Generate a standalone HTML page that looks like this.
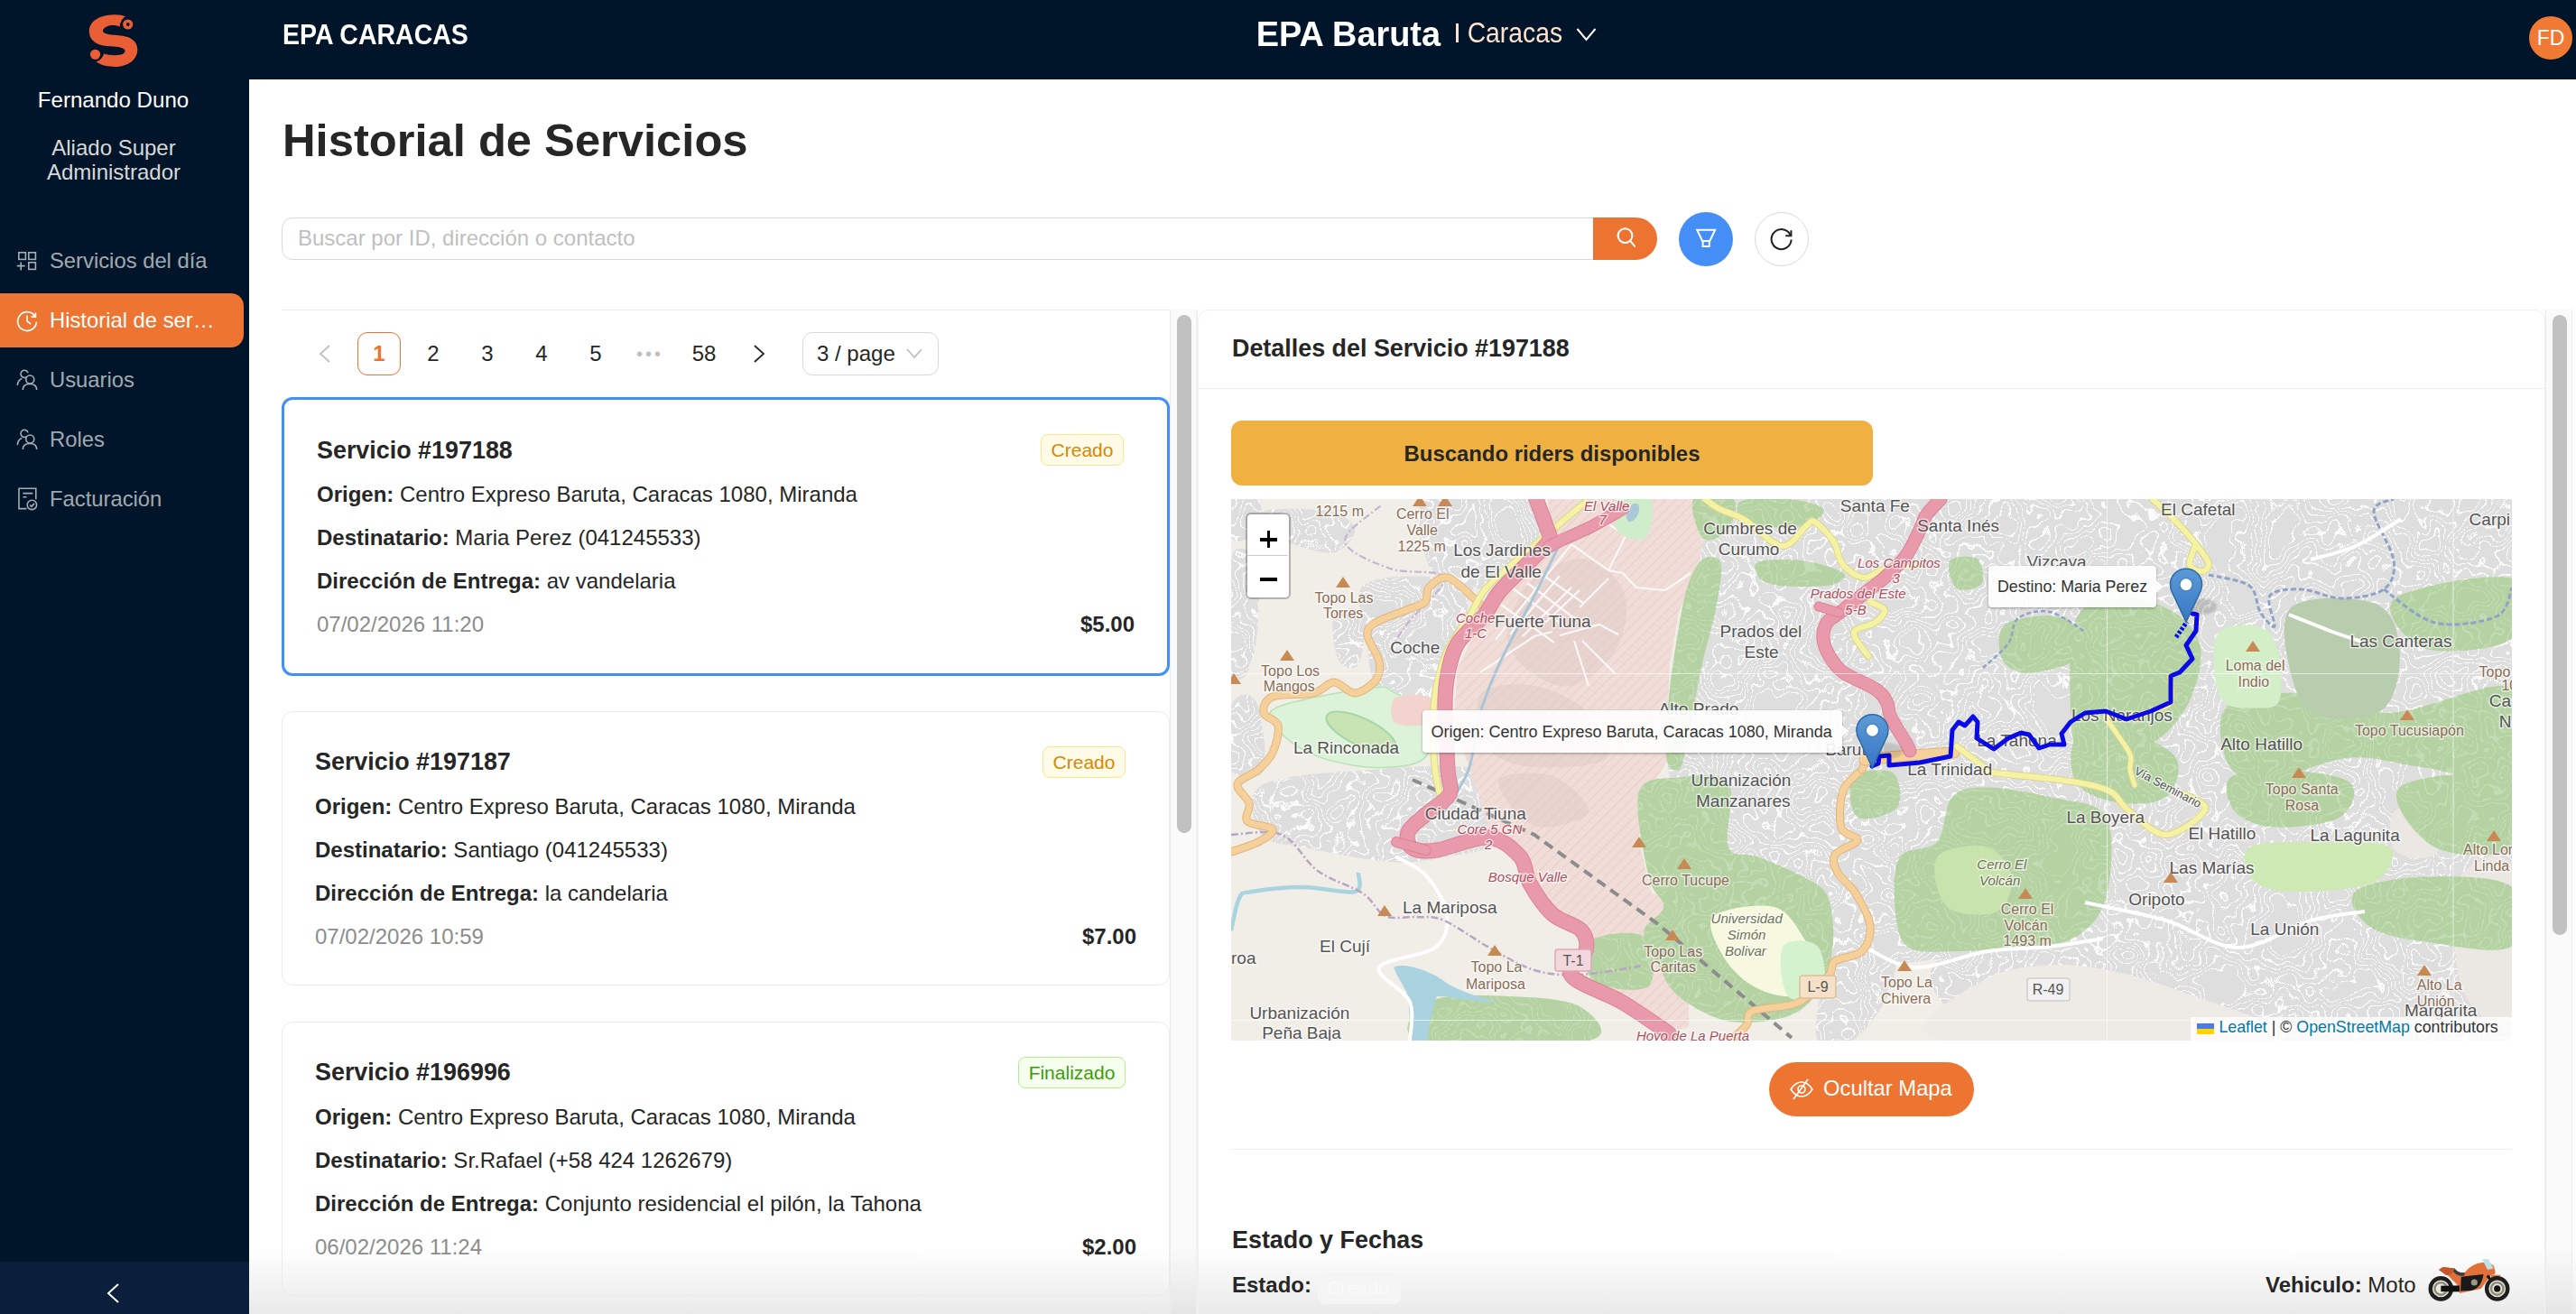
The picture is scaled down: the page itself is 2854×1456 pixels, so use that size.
<!DOCTYPE html>
<html><head><meta charset="utf-8">
<style>
*{box-sizing:border-box;margin:0;padding:0}
html,body{width:2854px;height:1456px;overflow:hidden;background:#fff;font-family:"Liberation Sans",sans-serif;color:#262626}
.a{position:absolute;white-space:nowrap;line-height:1}
.b{font-weight:bold}
#side{position:absolute;left:0;top:0;width:276px;height:1456px;background:#001529}
#trig{position:absolute;left:0;top:1398px;width:276px;height:58px;background:#0b1f3c}
#hdr{position:absolute;left:276px;top:0;width:2578px;height:88px;background:#001529}
.mi{position:absolute;left:55px;font-size:23.8px;color:rgba(255,255,255,0.65);line-height:1;white-space:nowrap}
.card{position:absolute;left:312px;width:984px;border:1px solid #ebebeb;border-radius:12px}
.tag{position:absolute;height:35px;border-radius:8px;font-size:21px;line-height:33px;text-align:center;border:1px solid}
.tc{background:#fffbe6;border-color:#ffe58f;color:#d48806}
.tf{background:#f6ffed;border-color:#b7eb8f;color:#389e0d}
</style></head><body>
<div style="position:absolute;left:276px;top:1382px;width:2578px;height:74px;background:linear-gradient(rgba(234,234,234,0),rgba(234,234,234,1))"></div>

<!-- SIDEBAR -->
<div id="side">
  <svg style="position:absolute;left:90px;top:10px" width="70" height="70" viewBox="0 0 70 70">
    <path fill="#e95e34" d="M49 8.3 C44 5.5,30 5,20 9.5 C12 13,8.5 19,8.8 25 C9 33,14 38,24 40.5 C30 41.5,40 41,46 43.5 C50 45.5,49 49.5,44 50.5 C38 52,30 51,25 49.5 C24 54,20 57.5,16.5 58.6 C22 62.5,30 64,37 64 C52 64,62.3 56,62.3 45 C62.3 36,55 31,46 29.8 C40 29,34 28.5,30 28 C25 27,23.5 25,24 23.5 C25 19.5,32 17.5,37 18 C40 18.5,42 19,42.6 19.7 C43 14,46 10,49 8.3 Z"/>
    <circle cx="51.7" cy="17" r="3.75" fill="none" stroke="#e95e34" stroke-width="3.7"/>
    <circle cx="15.5" cy="50.3" r="5.6" fill="#e95e34"/>
  </svg>
  <div class="a" style="left:0;width:251px;text-align:center;top:98.6px;font-size:24.1px;color:#fff">Fernando Duno</div>
  <div class="a" style="left:0;width:252px;text-align:center;top:151.7px;font-size:24px;color:#d9d9d9">Aliado Super</div>
  <div class="a" style="left:0;width:252px;text-align:center;top:179px;font-size:24px;color:#d9d9d9">Administrador</div>

  <div style="position:absolute;left:0;top:325px;width:270px;height:60px;background:#ed7431;border-radius:0 14px 14px 0"></div>
  <!-- icons -->
  <svg style="position:absolute;left:17px;top:277px" width="26" height="26" viewBox="0 0 26 26" fill="none" stroke="#a6adb4" stroke-width="1.6">
    <rect x="3.8" y="2.8" width="7.6" height="7.6"/><rect x="14.8" y="2.8" width="7.6" height="7.6"/><rect x="14.8" y="13.8" width="7.6" height="7.6"/>
    <path d="M1.8 17.6 H10.6 M6.2 13.4 V22.5"/>
  </svg>
  <svg style="position:absolute;left:17px;top:342px" width="26" height="26" viewBox="0 0 26 26" fill="none" stroke="#fff" stroke-width="1.7">
    <path d="M21.6 8.2 A10.4 10.4 0 1 0 23.4 14.6"/>
    <path d="M17.6 8.8 L22.4 9.4 L22.4 4.6" />
    <path d="M13 7.5 V13.8 L17 17"/>
  </svg>
  <svg style="position:absolute;left:17px;top:408px" width="26" height="26" viewBox="0 0 26 26" fill="none" stroke="#a6adb4" stroke-width="1.6">
    <circle cx="16.3" cy="12.5" r="4.5"/><path d="M8.3 24 C8.3 19.6,11.5 17.5,16 17.5 C20.5 17.5,23.7 19.6,23.7 24"/>
    <path d="M12.45 9.76 A4.1 4.1 0 1 1 14.06 5.34"/><path d="M2.3 19 C2.6 15,4.5 12.5,7.2 11.5"/>
  </svg>
  <svg style="position:absolute;left:17px;top:474px" width="26" height="26" viewBox="0 0 26 26" fill="none" stroke="#a6adb4" stroke-width="1.6">
    <circle cx="16.3" cy="12.5" r="4.5"/><path d="M8.3 24 C8.3 19.6,11.5 17.5,16 17.5 C20.5 17.5,23.7 19.6,23.7 24"/>
    <path d="M12.45 9.76 A4.1 4.1 0 1 1 14.06 5.34"/><path d="M2.3 19 C2.6 15,4.5 12.5,7.2 11.5"/>
  </svg>
  <svg style="position:absolute;left:18px;top:540px" width="26" height="26" viewBox="0 0 26 26" fill="none" stroke="#a6adb4" stroke-width="1.6">
    <path d="M11.5 23.6 H3 V1.3 H21.8 V13.3"/><path d="M7.4 6.6 H18.3 M7.4 10.7 H11.5"/>
    <circle cx="17.4" cy="19.4" r="5.2"/><path d="M15 19.5 L16.9 21.3 L19.9 17.9"/>
  </svg>
  <div class="mi" style="top:277.4px">Servicios del día</div>
  <div class="mi" style="top:343px;color:#fff">Historial de ser…</div>
  <div class="mi" style="top:408.8px">Usuarios</div>
  <div class="mi" style="top:474.5px">Roles</div>
  <div class="mi" style="top:540.8px">Facturación</div>
  <div id="trig">
    <svg style="position:absolute;left:116px;top:23px" width="20" height="24" viewBox="0 0 20 24" fill="none" stroke="#fff" stroke-width="2"><path d="M15 2 L4 12 L15 22"/></svg>
  </div>
</div>

<!-- HEADER -->
<div id="hdr">
  <div class="a b" style="left:37px;top:25.2px;font-size:28.5px;color:#fff;transform:scaleY(1.12);transform-origin:0 84.5%">EPA CARACAS</div>
  <div class="a b" style="left:1115.8px;top:20.1px;font-size:37.9px;color:#fff;transform:scaleY(1.035);transform-origin:0 84.5%">EPA Baruta</div>
  <div style="position:absolute;left:1337px;top:26px;width:3px;height:21px;background:#fde3cf"></div>
  <div class="a" style="left:1349.7px;top:23.3px;font-size:28.3px;color:#fde3cf;transform:scaleY(1.14);transform-origin:0 84.5%">Caracas</div>
  <svg style="position:absolute;left:1470px;top:30px" width="24" height="18" viewBox="0 0 24 18" fill="none" stroke="#fff" stroke-width="2"><path d="M1.5 2 L11.5 14 L21.5 2"/></svg>
  <div style="position:absolute;left:2526px;top:18px;width:48px;height:48px;border-radius:50%;background:#f07a33;color:#fff;font-size:23px;line-height:48px;text-align:center">FD</div>
</div>

<!-- TITLE + SEARCH -->
<div class="a b" style="left:313px;top:131px;font-size:50.7px;color:#262626">Historial de Servicios</div>
<div style="position:absolute;left:312px;top:241px;width:1460px;height:47px;border:1px solid #d9d9d9;border-radius:12px 0 0 12px"></div>
<div class="a" style="left:330px;top:252px;font-size:24px;color:#bfbfbf">Buscar por ID, dirección o contacto</div>
<div style="position:absolute;left:1765px;top:241px;width:71px;height:47px;background:#ed7331;border-radius:0 24px 24px 0"></div>
<svg style="position:absolute;left:1786px;top:250px" width="30" height="30" viewBox="0 0 30 30" fill="none" stroke="#fff" stroke-width="2"><circle cx="14.5" cy="11.1" r="7.9"/><path d="M20 16.6 L25.6 23.4"/></svg>
<div style="position:absolute;left:1860px;top:235px;width:60px;height:60px;border-radius:50%;background:#458ef5"></div>
<svg style="position:absolute;left:1875px;top:250px" width="30" height="30" viewBox="0 0 30 30" fill="none" stroke="#fff" stroke-width="2" stroke-linejoin="miter"><path d="M5.2 4.8 H25.2 L19.3 17 H11.1 Z"/><path d="M11.6 17 V23 H18.8 V17"/></svg>
<div style="position:absolute;left:1944px;top:235px;width:60px;height:60px;border-radius:50%;border:1px solid #d9d9d9;background:#fff"></div>
<svg style="position:absolute;left:1959px;top:249px" width="30" height="30" viewBox="0 0 30 30" fill="none" stroke="#222" stroke-width="2"><path d="M24.6 11.5 A11 11 0 1 0 25.6 16.5"/><path d="M25.4 6.2 V12.3 H19.2"/></svg>

<!-- LEFT LIST -->
<div style="position:absolute;left:312px;top:343px;width:984px;height:1px;background:#ebebeb"></div>
<div id="pag">
  <svg style="position:absolute;left:352px;top:381px" width="16" height="22" viewBox="0 0 16 22" fill="none" stroke="#bfbfbf" stroke-width="1.8"><path d="M13 2 L3 11 L13 20"/></svg>
  <div style="position:absolute;left:396px;top:368px;width:48px;height:48px;border:1.6px solid #ed7331;border-radius:11px;color:#ed7331;font-weight:bold;font-size:24px;line-height:45px;text-align:center">1</div>
  <div class="a" style="left:456px;top:368px;width:48px;line-height:48px;text-align:center;font-size:24px">2</div>
  <div class="a" style="left:516px;top:368px;width:48px;line-height:48px;text-align:center;font-size:24px">3</div>
  <div class="a" style="left:576px;top:368px;width:48px;line-height:48px;text-align:center;font-size:24px">4</div>
  <div class="a" style="left:636px;top:368px;width:48px;line-height:48px;text-align:center;font-size:24px">5</div>
  <div class="a" style="left:696px;top:368px;width:48px;line-height:48px;text-align:center;font-size:20px;color:#bfbfbf;letter-spacing:3px">•••</div>
  <div class="a" style="left:756px;top:368px;width:48px;line-height:48px;text-align:center;font-size:24px">58</div>
  <svg style="position:absolute;left:833px;top:381px" width="16" height="22" viewBox="0 0 16 22" fill="none" stroke="#262626" stroke-width="1.8"><path d="M3 2 L13 11 L3 20"/></svg>
  <div style="position:absolute;left:889px;top:368px;width:151px;height:48px;border:1px solid #d9d9d9;border-radius:11px"></div>
  <div class="a" style="left:905px;top:368px;line-height:48px;font-size:24px">3 / page</div>
  <svg style="position:absolute;left:1003px;top:384px" width="20" height="16" viewBox="0 0 20 16" fill="none" stroke="#bfbfbf" stroke-width="1.8"><path d="M2 3 L10 12 L18 3"/></svg>
</div>

<div class="card" style="top:440px;height:309px;border:3px solid #4190f5">
  <div class="a b" style="left:36px;top:42.7px;font-size:26.9px">Servicio #197188</div>
  <div class="tag tc" style="left:838px;top:38px;width:92px">Creado</div>
  <div class="a" style="left:36px;top:93px;font-size:24px"><b>Origen:</b> Centro Expreso Baruta, Caracas 1080, Miranda</div>
  <div class="a" style="left:36px;top:141px;font-size:24px"><b>Destinatario:</b> Maria Perez (041245533)</div>
  <div class="a" style="left:36px;top:189px;font-size:24px"><b>Dirección de Entrega:</b> av vandelaria</div>
  <div class="a" style="left:36px;top:237px;font-size:24px;color:#8c8c8c">07/02/2026 11:20</div>
  <div class="a b" style="right:36px;top:237px;font-size:24px">$5.00</div>
</div>

<div class="card" style="top:788px;height:304px">
  <div class="a b" style="left:36px;top:42px;font-size:26.9px">Servicio #197187</div>
  <div class="tag tc" style="left:842px;top:38px;width:92px">Creado</div>
  <div class="a" style="left:36px;top:93px;font-size:24px"><b>Origen:</b> Centro Expreso Baruta, Caracas 1080, Miranda</div>
  <div class="a" style="left:36px;top:141px;font-size:24px"><b>Destinatario:</b> Santiago (041245533)</div>
  <div class="a" style="left:36px;top:189px;font-size:24px"><b>Dirección de Entrega:</b> la candelaria</div>
  <div class="a" style="left:36px;top:237px;font-size:24px;color:#8c8c8c">07/02/2026 10:59</div>
  <div class="a b" style="right:36px;top:237px;font-size:24px">$7.00</div>
</div>

<div class="card" style="top:1132px;height:304px">
  <div class="a b" style="left:36px;top:42px;font-size:26.9px">Servicio #196996</div>
  <div class="tag tf" style="left:815px;top:38px;width:119px">Finalizado</div>
  <div class="a" style="left:36px;top:93px;font-size:24px"><b>Origen:</b> Centro Expreso Baruta, Caracas 1080, Miranda</div>
  <div class="a" style="left:36px;top:141px;font-size:24px"><b>Destinatario:</b> Sr.Rafael (+58 424 1262679)</div>
  <div class="a" style="left:36px;top:189px;font-size:24px"><b>Dirección de Entrega:</b> Conjunto residencial el pilón, la Tahona</div>
  <div class="a" style="left:36px;top:237px;font-size:24px;color:#8c8c8c">06/02/2026 11:24</div>
  <div class="a b" style="right:36px;top:237px;font-size:24px">$2.00</div>
</div>

<!-- scrollbar left -->
<div style="position:absolute;left:1296px;top:343px;width:31px;height:1113px;background:rgba(0,0,0,0.02);border-left:1.5px solid #ebebeb;border-right:2px solid #f0f0f0"></div>
<div style="position:absolute;left:1304px;top:349px;width:16px;height:574px;background:#c1c1c1;border-radius:8px"></div>

<!-- RIGHT PANEL -->
<div style="position:absolute;left:1327px;top:343px;width:1493px;height:1200px;border:1px solid #f0f0f0;border-radius:12px"></div>
<div style="position:absolute;left:1328px;top:430px;width:1491px;height:1px;background:#f0f0f0"></div>
<div class="a b" style="left:1365px;top:373px;font-size:26.9px">Detalles del Servicio #197188</div>
<div style="position:absolute;left:1364px;top:466px;width:711px;height:72px;background:#efb141;border-radius:12px"></div>
<div class="a b" style="left:1364px;width:711px;text-align:center;top:490.6px;font-size:23.9px">Buscando riders disponibles</div>

<!--MAP--><div id="map" style="position:absolute;left:1364px;top:553px;width:1419px;height:600px;background:#f1eee8;overflow:hidden">
<svg width="1419" height="600" viewBox="1364 553 1419 600" style="position:absolute;left:0;top:0">
<defs><pattern id="hatch" width="8" height="8" patternUnits="userSpaceOnUse" patternTransform="rotate(45)"><rect width="8" height="8" fill="#f0ddd8"/><line x1="0" y1="0" x2="0" y2="8" stroke="#e6c3bd" stroke-width="1.1"/></pattern>
<filter id="blur1"><feGaussianBlur stdDeviation="1.2"/></filter></defs>
<rect x="1364" y="553" width="1419" height="600" fill="#f1eee8"/>
<path d="M1890.0 553.0 C2038.8 540.2,2634.2 453.0,2783.0 553.0 C2931.8 653.0,2830.2 1053.0,2783.0 1153.0 C2735.8 1253.0,2563.8 1160.2,2500.0 1153.0 C2436.2 1145.8,2431.7 1122.2,2400.0 1110.0 C2368.3 1097.8,2343.3 1088.3,2310.0 1080.0 C2276.7 1071.7,2251.7 1061.7,2200.0 1060.0 C2148.3 1058.3,2035.0 1081.7,2000.0 1070.0 C1965.0 1058.3,2003.3 1004.2,1990.0 990.0 C1976.7 975.8,1934.2 1000.0,1920.0 985.0 C1905.8 970.0,1916.7 920.8,1905.0 900.0 C1893.3 879.2,1857.5 876.7,1850.0 860.0 C1842.5 843.3,1856.7 826.7,1860.0 800.0 C1863.3 773.3,1865.0 728.3,1870.0 700.0 C1875.0 671.7,1886.7 654.5,1890.0 630.0 C1893.3 605.5,1741.2 565.8,1890.0 553.0 Z" fill="#dfdede"/>
<path d="M1398.0 870.0 C1418.3 858.0,1479.7 855.8,1520.0 853.0 C1560.3 850.2,1616.7 845.2,1640.0 853.0 C1663.3 860.8,1653.3 887.2,1660.0 900.0 C1666.7 912.8,1690.0 921.7,1680.0 930.0 C1670.0 938.3,1623.3 945.8,1600.0 950.0 C1576.7 954.2,1565.0 956.7,1540.0 955.0 C1515.0 953.3,1473.7 945.0,1450.0 940.0 C1426.3 935.0,1406.7 936.7,1398.0 925.0 C1389.3 913.3,1377.7 882.0,1398.0 870.0 Z" fill="#dfdede"/>
<path d="M1364.0 553.0 C1368.9 546.2,1388.3 547.7,1393.7 553.0 C1399.0 558.3,1398.6 577.3,1396.0 585.0 C1393.3 592.6,1383.0 597.1,1377.7 598.7 C1372.4 600.2,1366.3 601.7,1364.0 594.1 C1361.7 586.5,1359.1 559.8,1364.0 553.0 Z" fill="#dfdede"/>
<path d="M1398.2 566.7 C1410.4 562.5,1456.4 563.3,1473.6 566.7 C1490.7 570.1,1500.2 579.6,1501.0 587.2 C1501.7 594.8,1489.5 609.7,1478.1 612.3 C1466.7 615.0,1445.4 606.6,1432.5 603.2 C1419.5 599.8,1406.2 597.9,1400.5 591.8 C1394.8 585.7,1386.1 570.9,1398.2 566.7 Z" fill="#dfdede"/>
<path d="M1364.0 619.2 C1368.6 598.3,1386.4 609.7,1391.4 621.5 C1396.3 633.3,1394.8 670.2,1393.7 690.0 C1392.5 709.7,1389.5 730.7,1384.5 740.2 C1379.6 749.7,1367.4 767.2,1364.0 747.0 C1360.6 726.9,1359.4 640.1,1364.0 619.2 Z" fill="#dfdede"/>
<path d="M1510.1 648.9 C1523.0 636.7,1572.9 637.8,1592.3 639.7 C1611.7 641.6,1622.7 648.1,1626.5 660.3 C1630.3 672.5,1620.8 693.4,1615.1 712.8 C1609.4 732.2,1601.8 765.3,1592.3 776.7 C1582.7 788.1,1569.4 784.3,1558.0 781.3 C1546.6 778.2,1531.0 769.8,1523.8 758.4 C1516.6 747.0,1516.9 731.0,1514.7 712.8 C1512.4 694.5,1497.2 661.0,1510.1 648.9 Z" fill="#dfdede"/>
<path d="M1580.8 553.0 C1601.8 541.6,1687.4 543.5,1706.4 553.0 C1725.4 562.5,1704.5 594.1,1695.0 610.1 C1685.5 626.0,1663.4 642.0,1649.3 648.9 C1635.2 655.7,1621.9 655.7,1610.5 651.2 C1599.1 646.6,1585.8 637.8,1580.8 621.5 C1575.9 605.1,1559.9 564.4,1580.8 553.0 Z" fill="#dfdede"/>
<path d="M1478.1 680.8 C1482.7 672.5,1505.5 671.7,1510.1 680.8 C1514.7 690.0,1510.1 727.2,1505.5 735.6 C1501.0 744.0,1487.3 740.2,1482.7 731.0 C1478.1 721.9,1473.6 689.2,1478.1 680.8 Z" fill="#dfdede"/>
<path d="M1364.0 781.3 C1368.6 768.6,1385.3 764.7,1391.4 776.7 C1397.5 788.6,1405.1 840.2,1400.5 852.9 C1396.0 865.6,1370.1 864.9,1364.0 852.9 C1357.9 841.0,1359.4 794.0,1364.0 781.3 Z" fill="#dfdede"/>
<path d="M2041.6 1048.8 C2054.4 1041.9,2088.4 1042.3,2096.6 1051.5 C2104.9 1060.7,2098.5 1087.0,2091.1 1103.9 C2083.8 1120.7,2065.4 1144.7,2052.6 1152.9 C2039.7 1161.1,2019.5 1162.9,2014.0 1152.9 C2008.5 1142.9,2014.9 1110.2,2019.5 1092.8 C2024.1 1075.5,2028.7 1055.7,2041.6 1048.8 Z" fill="#dfdede"/>
<path d="M2146.2 1065.3 C2159.1 1057.5,2197.6 1057.0,2223.3 1057.0 C2249.0 1057.0,2285.8 1057.5,2300.5 1065.3 C2315.1 1073.1,2317.0 1091.9,2311.5 1103.9 C2306.0 1115.8,2287.6 1132.3,2267.4 1136.9 C2247.2 1141.5,2210.5 1136.9,2190.3 1131.4 C2170.1 1125.9,2153.6 1114.9,2146.2 1103.9 C2138.9 1092.8,2133.4 1073.1,2146.2 1065.3 Z" fill="#dfdede"/>
<path d="M2355.5 1048.8 C2370.2 1039.6,2415.2 1038.7,2438.2 1043.3 C2461.1 1047.9,2488.7 1062.5,2493.3 1076.3 C2497.8 1090.1,2481.3 1115.8,2465.7 1125.9 C2450.1 1136.0,2418.9 1141.5,2399.6 1136.9 C2380.3 1132.3,2357.4 1113.0,2350.0 1098.3 C2342.7 1083.7,2340.8 1057.9,2355.5 1048.8 Z" fill="#dfdede"/>
<path d="M2575.9 1103.9 C2585.1 1094.8,2638.3 1090.2,2658.5 1098.3 C2678.7 1106.5,2706.2 1143.8,2697.1 1152.9 C2687.9 1162.0,2623.6 1161.1,2603.4 1152.9 C2583.2 1144.7,2566.7 1112.9,2575.9 1103.9 Z" fill="#dfdede"/>
<clipPath id="urb">
<path d="M1890.0 553.0 C2038.8 540.2,2634.2 453.0,2783.0 553.0 C2931.8 653.0,2830.2 1053.0,2783.0 1153.0 C2735.8 1253.0,2563.8 1160.2,2500.0 1153.0 C2436.2 1145.8,2431.7 1122.2,2400.0 1110.0 C2368.3 1097.8,2343.3 1088.3,2310.0 1080.0 C2276.7 1071.7,2251.7 1061.7,2200.0 1060.0 C2148.3 1058.3,2035.0 1081.7,2000.0 1070.0 C1965.0 1058.3,2003.3 1004.2,1990.0 990.0 C1976.7 975.8,1934.2 1000.0,1920.0 985.0 C1905.8 970.0,1916.7 920.8,1905.0 900.0 C1893.3 879.2,1857.5 876.7,1850.0 860.0 C1842.5 843.3,1856.7 826.7,1860.0 800.0 C1863.3 773.3,1865.0 728.3,1870.0 700.0 C1875.0 671.7,1886.7 654.5,1890.0 630.0 C1893.3 605.5,1741.2 565.8,1890.0 553.0 Z"/>
<path d="M1398.0 870.0 C1418.3 858.0,1479.7 855.8,1520.0 853.0 C1560.3 850.2,1616.7 845.2,1640.0 853.0 C1663.3 860.8,1653.3 887.2,1660.0 900.0 C1666.7 912.8,1690.0 921.7,1680.0 930.0 C1670.0 938.3,1623.3 945.8,1600.0 950.0 C1576.7 954.2,1565.0 956.7,1540.0 955.0 C1515.0 953.3,1473.7 945.0,1450.0 940.0 C1426.3 935.0,1406.7 936.7,1398.0 925.0 C1389.3 913.3,1377.7 882.0,1398.0 870.0 Z"/>
<path d="M1364.0 553.0 C1368.9 546.2,1388.3 547.7,1393.7 553.0 C1399.0 558.3,1398.6 577.3,1396.0 585.0 C1393.3 592.6,1383.0 597.1,1377.7 598.7 C1372.4 600.2,1366.3 601.7,1364.0 594.1 C1361.7 586.5,1359.1 559.8,1364.0 553.0 Z"/>
<path d="M1398.2 566.7 C1410.4 562.5,1456.4 563.3,1473.6 566.7 C1490.7 570.1,1500.2 579.6,1501.0 587.2 C1501.7 594.8,1489.5 609.7,1478.1 612.3 C1466.7 615.0,1445.4 606.6,1432.5 603.2 C1419.5 599.8,1406.2 597.9,1400.5 591.8 C1394.8 585.7,1386.1 570.9,1398.2 566.7 Z"/>
<path d="M1364.0 619.2 C1368.6 598.3,1386.4 609.7,1391.4 621.5 C1396.3 633.3,1394.8 670.2,1393.7 690.0 C1392.5 709.7,1389.5 730.7,1384.5 740.2 C1379.6 749.7,1367.4 767.2,1364.0 747.0 C1360.6 726.9,1359.4 640.1,1364.0 619.2 Z"/>
<path d="M1510.1 648.9 C1523.0 636.7,1572.9 637.8,1592.3 639.7 C1611.7 641.6,1622.7 648.1,1626.5 660.3 C1630.3 672.5,1620.8 693.4,1615.1 712.8 C1609.4 732.2,1601.8 765.3,1592.3 776.7 C1582.7 788.1,1569.4 784.3,1558.0 781.3 C1546.6 778.2,1531.0 769.8,1523.8 758.4 C1516.6 747.0,1516.9 731.0,1514.7 712.8 C1512.4 694.5,1497.2 661.0,1510.1 648.9 Z"/>
<path d="M1580.8 553.0 C1601.8 541.6,1687.4 543.5,1706.4 553.0 C1725.4 562.5,1704.5 594.1,1695.0 610.1 C1685.5 626.0,1663.4 642.0,1649.3 648.9 C1635.2 655.7,1621.9 655.7,1610.5 651.2 C1599.1 646.6,1585.8 637.8,1580.8 621.5 C1575.9 605.1,1559.9 564.4,1580.8 553.0 Z"/>
<path d="M1478.1 680.8 C1482.7 672.5,1505.5 671.7,1510.1 680.8 C1514.7 690.0,1510.1 727.2,1505.5 735.6 C1501.0 744.0,1487.3 740.2,1482.7 731.0 C1478.1 721.9,1473.6 689.2,1478.1 680.8 Z"/>
<path d="M1364.0 781.3 C1368.6 768.6,1385.3 764.7,1391.4 776.7 C1397.5 788.6,1405.1 840.2,1400.5 852.9 C1396.0 865.6,1370.1 864.9,1364.0 852.9 C1357.9 841.0,1359.4 794.0,1364.0 781.3 Z"/>
<path d="M2041.6 1048.8 C2054.4 1041.9,2088.4 1042.3,2096.6 1051.5 C2104.9 1060.7,2098.5 1087.0,2091.1 1103.9 C2083.8 1120.7,2065.4 1144.7,2052.6 1152.9 C2039.7 1161.1,2019.5 1162.9,2014.0 1152.9 C2008.5 1142.9,2014.9 1110.2,2019.5 1092.8 C2024.1 1075.5,2028.7 1055.7,2041.6 1048.8 Z"/>
<path d="M2146.2 1065.3 C2159.1 1057.5,2197.6 1057.0,2223.3 1057.0 C2249.0 1057.0,2285.8 1057.5,2300.5 1065.3 C2315.1 1073.1,2317.0 1091.9,2311.5 1103.9 C2306.0 1115.8,2287.6 1132.3,2267.4 1136.9 C2247.2 1141.5,2210.5 1136.9,2190.3 1131.4 C2170.1 1125.9,2153.6 1114.9,2146.2 1103.9 C2138.9 1092.8,2133.4 1073.1,2146.2 1065.3 Z"/>
<path d="M2355.5 1048.8 C2370.2 1039.6,2415.2 1038.7,2438.2 1043.3 C2461.1 1047.9,2488.7 1062.5,2493.3 1076.3 C2497.8 1090.1,2481.3 1115.8,2465.7 1125.9 C2450.1 1136.0,2418.9 1141.5,2399.6 1136.9 C2380.3 1132.3,2357.4 1113.0,2350.0 1098.3 C2342.7 1083.7,2340.8 1057.9,2355.5 1048.8 Z"/>
<path d="M2575.9 1103.9 C2585.1 1094.8,2638.3 1090.2,2658.5 1098.3 C2678.7 1106.5,2706.2 1143.8,2697.1 1152.9 C2687.9 1162.0,2623.6 1161.1,2603.4 1152.9 C2583.2 1144.7,2566.7 1112.9,2575.9 1103.9 Z"/>
</clipPath>
<filter id="stx" x="0" y="0" width="100%" height="100%" color-interpolation-filters="sRGB"><feTurbulence type="fractalNoise" baseFrequency="0.016" numOctaves="3" seed="5" result="n"/><feColorMatrix in="n" type="matrix" values="0 0 0 0 1  0 0 0 0 1  0 0 0 0 1  2 0 0 0 -0.5" result="m"/><feComponentTransfer in="m"><feFuncA type="discrete" tableValues="0 0 0 1 0 0 0 0 0 1 0 0 0 0 0 1 0 0 0 0 0 1 0 0 0 0 0 1 0 0 0 0 0 1 0 0 0 0 0 1 0 0"/></feComponentTransfer><feGaussianBlur stdDeviation="0.5"/></filter>
<g clip-path="url(#urb)"><rect x="1364" y="553" width="1419" height="600" filter="url(#stx)" opacity="0.85"/></g>
<path d="M2200.0 1085.0 C2225.0 1071.2,2263.3 1067.5,2300.0 1070.0 C2336.7 1072.5,2383.3 1086.2,2420.0 1100.0 C2456.7 1113.8,2565.0 1144.2,2520.0 1153.0 C2475.0 1161.8,2203.3 1164.3,2150.0 1153.0 C2096.7 1141.7,2175.0 1098.8,2200.0 1085.0 Z" fill="#eeebe6"/>
<path d="M2721.0 980.0 C2729.8 956.7,2772.7 935.5,2783.0 960.0 C2793.3 984.5,2791.8 1103.7,2783.0 1127.0 C2774.2 1150.3,2740.3 1124.5,2730.0 1100.0 C2719.7 1075.5,2712.2 1003.3,2721.0 980.0 Z" fill="#ebe8e3"/>
<path d="M2652.0 900.0 C2659.5 891.0,2692.0 882.5,2700.0 890.0 C2708.0 897.5,2707.5 936.0,2700.0 945.0 C2692.5 954.0,2663.0 951.5,2655.0 944.0 C2647.0 936.5,2644.5 909.0,2652.0 900.0 Z" fill="#ebe8e3"/>
<path d="M1715.0,553.0 1895.0,553.0 1887.0,598.0 1882.0,628.0 1860.0,678.0 1850.0,735.0 1848.0,781.0 1856.0,830.0 1830.0,870.0 1815.0,930.0 1830.0,990.0 1871.0,1000.0 1871.0,1138.0 1849.0,1145.0 1797.0,1111.0 1756.0,1054.0 1752.0,1031.0 1720.0,1013.0 1695.0,978.0 1683.0,949.0 1650.0,925.0 1638.0,880.0 1610.0,800.0 1615.0,740.0 1640.0,690.0 1690.0,630.0 1718.0,600.0Z" fill="url(#hatch)"/>
<path d="M1700.0 640.0 C1715.0 626.7,1743.3 616.7,1760.0 620.0 C1776.7 623.3,1795.0 643.3,1800.0 660.0 C1805.0 676.7,1800.0 703.3,1790.0 720.0 C1780.0 736.7,1756.7 756.7,1740.0 760.0 C1723.3 763.3,1701.7 750.0,1690.0 740.0 C1678.3 730.0,1668.3 716.7,1670.0 700.0 C1671.7 683.3,1685.0 653.3,1700.0 640.0 Z" fill="#d9c3c0" opacity="0.35"/>
<path d="M1640.0 770.0 C1648.3 758.3,1680.0 756.7,1700.0 760.0 C1720.0 763.3,1746.7 776.7,1760.0 790.0 C1773.3 803.3,1790.0 830.0,1780.0 840.0 C1770.0 850.0,1721.7 851.7,1700.0 850.0 C1678.3 848.3,1660.0 843.3,1650.0 830.0 C1640.0 816.7,1631.7 781.7,1640.0 770.0 Z" fill="#d9c3c0" opacity="0.35"/>
<path d="M1660.0 865.0 C1663.3 855.8,1703.3 854.2,1720.0 860.0 C1736.7 865.8,1763.3 890.8,1760.0 900.0 C1756.7 909.2,1716.7 920.8,1700.0 915.0 C1683.3 909.2,1656.7 874.2,1660.0 865.0 Z" fill="#d9c3c0" opacity="0.35"/>
<path d="M1657.0,709.0 1741.0,603.0" stroke="#fbfbfb" stroke-width="2.2" fill="none" opacity="0.9"/>
<path d="M1741.0,603.0 1782.0,632.0 1798.0,635.0" stroke="#fbfbfb" stroke-width="2.2" fill="none" opacity="0.9"/>
<path d="M1782.0,632.0 1801.0,594.0 1783.0,581.0" stroke="#fbfbfb" stroke-width="2.2" fill="none" opacity="0.9"/>
<path d="M1706.0,635.0 1754.0,668.0" stroke="#fbfbfb" stroke-width="2.2" fill="none" opacity="0.9"/>
<path d="M1692.0,646.0 1747.0,687.0" stroke="#fbfbfb" stroke-width="2.2" fill="none" opacity="0.9"/>
<path d="M1676.0,652.0 1735.0,695.0" stroke="#fbfbfb" stroke-width="2.2" fill="none" opacity="0.9"/>
<path d="M1663.0,670.0 1722.0,712.0" stroke="#fbfbfb" stroke-width="2.2" fill="none" opacity="0.9"/>
<path d="M1673.0,703.0 1728.0,638.0" stroke="#fbfbfb" stroke-width="2.2" fill="none" opacity="0.9"/>
<path d="M1687.0,705.0 1741.0,651.0" stroke="#fbfbfb" stroke-width="2.2" fill="none" opacity="0.9"/>
<path d="M1712.0,690.0 1750.0,654.0" stroke="#fbfbfb" stroke-width="2.2" fill="none" opacity="0.9"/>
<path d="M1750.0,673.0 1782.0,641.0" stroke="#fbfbfb" stroke-width="2.2" fill="none" opacity="0.9"/>
<path d="M1798.0,635.0 1813.0,651.0 1845.0,654.0 1873.0,635.0" stroke="#fbfbfb" stroke-width="2.2" fill="none" opacity="0.9"/>
<path d="M1728.0,704.0 1772.0,692.0 1793.0,703.0" stroke="#fbfbfb" stroke-width="2.2" fill="none" opacity="0.9"/>
<path d="M1744.0,710.0 1760.0,760.0" stroke="#fbfbfb" stroke-width="2.2" fill="none" opacity="0.9"/>
<path d="M1753.0,710.0 1790.0,747.0" stroke="#fbfbfb" stroke-width="2.2" fill="none" opacity="0.9"/>
<path d="M1640.0,745.0 1700.0,705.0 1720.0,700.0" stroke="#fbfbfb" stroke-width="2.2" fill="none" opacity="0.9"/>
<path d="M1797.0 553.0 C1803.5 547.8,1824.2 546.5,1829.0 553.0 C1833.8 559.5,1829.7 584.7,1826.0 592.0 C1822.3 599.3,1813.0 598.3,1807.0 597.0 C1801.0 595.7,1791.7 591.3,1790.0 584.0 C1788.3 576.7,1790.5 558.2,1797.0 553.0 Z" fill="#cfeccb"/>
<ellipse cx="1809" cy="568" rx="6" ry="11" transform="rotate(25 1809 568)" fill="#a9c9d9"/>
<path d="M1887.3 619.1 C1893.3 615.4,1904.3 615.4,1906.6 624.6 C1908.9 633.8,1904.3 656.7,1901.1 674.2 C1897.9 691.6,1891.4 710.9,1887.3 729.3 C1883.2 747.6,1879.5 767.8,1876.3 784.4 C1873.1 800.9,1870.8 817.0,1868.0 828.4 C1865.3 839.9,1863.4 851.4,1859.8 853.2 C1856.1 855.1,1847.8 852.8,1846.0 839.4 C1844.2 826.1,1846.5 797.2,1848.8 773.3 C1851.0 749.5,1856.1 717.3,1859.8 696.2 C1863.4 675.1,1866.2 659.5,1870.8 646.6 C1875.4 633.8,1881.3 622.8,1887.3 619.1 Z" fill="#b4d2a2"/>
<path d="M1876.3 553.0 C1881.8 545.7,1913.9 547.5,1920.4 553.0 C1926.8 558.5,1920.4 578.7,1914.9 586.1 C1909.3 593.4,1893.7 602.6,1887.3 597.1 C1880.9 591.6,1870.8 560.3,1876.3 553.0 Z" fill="#b4d2a2"/>
<path d="M1928.1 555.8 C1935.4 551.2,1965.6 551.6,1981.0 553.0 C1996.3 554.4,2017.3 559.1,2020.1 564.0 C2022.8 569.0,2011.3 580.0,1997.5 582.7 C1983.6 585.5,1948.5 585.0,1936.9 580.5 C1925.3 576.0,1920.7 560.3,1928.1 555.8 Z" fill="#b4d2a2"/>
<path d="M1946.8 623.5 C1953.2 619.3,1981.5 619.3,1997.5 621.3 C2013.5 623.3,2038.1 631.0,2042.7 635.6 C2047.2 640.2,2039.0 647.0,2025.0 648.8 C2011.1 650.7,1972.0 650.9,1958.9 646.6 C1945.9 642.4,1940.4 627.7,1946.8 623.5 Z" fill="#b4d2a2"/>
<path d="M2160.0 621.9 C2163.7 616.3,2184.3 615.0,2190.3 619.1 C2196.2 623.2,2199.5 641.1,2195.8 646.6 C2192.1 652.2,2174.2 656.3,2168.2 652.2 C2162.3 648.0,2156.3 627.4,2160.0 621.9 Z" fill="#b4d2a2"/>
<path d="M2223.3 690.7 C2235.3 683.4,2276.6 678.8,2289.4 685.2 C2302.3 691.6,2307.8 719.2,2300.5 729.3 C2293.1 739.4,2259.1 745.8,2245.4 745.8 C2231.6 745.8,2221.5 738.5,2217.8 729.3 C2214.2 720.1,2211.4 698.1,2223.3 690.7 Z" fill="#b4d2a2"/>
<path d="M2300.5 685.2 C2310.6 662.3,2337.2 664.1,2355.5 663.2 C2373.9 662.3,2396.9 670.5,2410.6 679.7 C2424.4 688.9,2435.4 702.6,2438.2 718.3 C2440.9 733.9,2433.6 757.7,2427.1 773.3 C2420.7 788.9,2411.5 800.9,2399.6 811.9 C2387.7 822.9,2370.2 833.0,2355.5 839.4 C2340.8 845.9,2321.6 856.9,2311.5 850.5 C2301.4 844.0,2296.8 828.4,2294.9 800.9 C2293.1 773.3,2290.4 708.2,2300.5 685.2 Z" fill="#b4d2a2"/>
<path d="M2653.0 663.2 C2669.2 650.3,2761.3 633.8,2783.0 641.1 C2804.7 648.5,2799.2 694.4,2783.0 707.2 C2766.8 720.1,2707.7 725.6,2686.0 718.3 C2664.4 710.9,2636.8 676.0,2653.0 663.2 Z" fill="#b4d2a2"/>
<path d="M2465.7 784.4 C2477.6 770.6,2512.5 766.9,2542.8 767.8 C2573.1 768.8,2607.5 790.8,2647.5 789.9 C2687.5 788.9,2760.4 750.4,2783.0 762.3 C2805.6 774.3,2799.2 846.8,2783.0 861.5 C2766.8 876.2,2716.0 854.1,2686.0 850.5 C2656.1 846.8,2631.0 837.6,2603.4 839.4 C2575.9 841.3,2542.8 859.6,2520.8 861.5 C2498.8 863.3,2480.4 863.3,2471.2 850.5 C2462.0 837.6,2453.8 798.1,2465.7 784.4 Z" fill="#b4d2a2"/>
<path d="M2300.5 817.4 C2309.6 808.2,2337.2 808.2,2355.5 811.9 C2373.9 815.6,2403.3 827.5,2410.6 839.4 C2418.0 851.4,2410.6 875.2,2399.6 883.5 C2388.6 891.8,2361.0 891.8,2344.5 889.0 C2328.0 886.3,2307.8 878.9,2300.5 867.0 C2293.1 855.1,2291.3 826.6,2300.5 817.4 Z" fill="#b4d2a2"/>
<path d="M2471.2 861.5 C2480.4 853.7,2509.8 852.3,2531.8 853.2 C2553.8 854.1,2593.3 858.3,2603.4 867.0 C2613.5 875.7,2606.2 897.3,2592.4 905.5 C2578.6 913.8,2540.1 917.5,2520.8 916.6 C2501.5 915.6,2485.0 909.2,2476.7 900.0 C2468.5 890.9,2462.0 869.3,2471.2 861.5 Z" fill="#b4d2a2"/>
<path d="M2658.5 872.5 C2672.8 859.6,2762.3 850.5,2783.0 861.5 C2803.7 872.5,2797.3 925.7,2783.0 938.6 C2768.7 951.5,2717.8 949.6,2697.1 938.6 C2676.3 927.6,2644.2 885.3,2658.5 872.5 Z" fill="#b4d2a2"/>
<path d="M2608.9 988.2 C2619.0 979.0,2657.0 972.6,2686.0 971.6 C2715.1 970.7,2766.8 969.8,2783.0 982.7 C2799.2 995.5,2799.2 1038.7,2783.0 1048.8 C2766.8 1058.9,2712.3 1046.9,2686.0 1043.3 C2659.8 1039.6,2638.3 1035.9,2625.5 1026.7 C2612.6 1017.6,2598.8 997.4,2608.9 988.2 Z" fill="#b4d2a2"/>
<path d="M2104.9 949.6 C2112.7 937.7,2136.6 944.1,2146.2 933.1 C2155.9 922.1,2153.6 893.6,2162.7 883.5 C2171.9 873.4,2182.9 872.5,2201.3 872.5 C2219.7 872.5,2250.9 878.0,2272.9 883.5 C2294.9 889.0,2323.4 887.2,2333.5 905.5 C2343.6 923.9,2339.0 971.6,2333.5 993.7 C2328.0 1015.7,2315.1 1028.6,2300.5 1037.8 C2285.8 1046.9,2268.3 1046.0,2245.4 1048.8 C2222.4 1051.5,2184.8 1054.3,2162.7 1054.3 C2140.7 1054.3,2123.7 1057.0,2113.2 1048.8 C2102.6 1040.5,2100.8 1021.2,2099.4 1004.7 C2098.0 988.2,2097.1 961.6,2104.9 949.6 Z" fill="#b4d2a2"/>
<path d="M1815.7 878.0 C1821.2 859.6,1843.2 863.3,1859.8 861.5 C1876.3 859.6,1905.7 854.1,1914.9 867.0 C1924.0 879.8,1909.3 924.8,1914.9 938.6 C1920.4 952.4,1934.1 944.1,1947.9 949.6 C1961.7 955.1,1984.6 964.3,1997.5 971.6 C2010.3 979.0,2019.5 980.8,2025.0 993.7 C2030.5 1006.5,2032.4 1031.3,2030.5 1048.8 C2028.7 1066.2,2022.3 1085.5,2014.0 1098.3 C2005.7 1111.2,1997.5 1120.4,1981.0 1125.9 C1964.4 1131.4,1935.1 1135.1,1914.9 1131.4 C1894.7 1127.7,1872.6 1114.0,1859.8 1103.9 C1846.9 1093.8,1844.2 1082.7,1837.7 1070.8 C1831.3 1058.9,1820.3 1043.3,1821.2 1032.2 C1822.1 1021.2,1842.3 1014.8,1843.2 1004.7 C1844.2 994.6,1831.3 992.8,1826.7 971.6 C1822.1 950.5,1810.2 896.4,1815.7 878.0 Z" fill="#b4d2a2"/>
<path d="M1760.6 1043.3 C1769.8 1035.0,1810.2 1029.5,1821.2 1037.8 C1832.2 1046.0,1835.9 1084.6,1826.7 1092.8 C1817.5 1101.1,1777.1 1095.6,1766.1 1087.3 C1755.1 1079.1,1751.4 1051.5,1760.6 1043.3 Z" fill="#b4d2a2"/>
<path d="M1584.3 1109.4 C1600.9 1101.2,1644.9 1102.9,1672.5 1103.9 C1700.0 1104.8,1734.9 1106.7,1749.6 1114.9 C1764.3 1123.0,1790.0 1146.5,1760.6 1152.9 C1731.2 1159.2,1602.7 1160.1,1573.3 1152.9 C1543.9 1145.6,1567.8 1117.5,1584.3 1109.4 Z" fill="#b4d2a2"/>
<path d="M2052.6 861.5 C2059.0 853.2,2088.4 850.5,2096.6 856.0 C2104.9 861.5,2108.6 886.3,2102.1 894.5 C2095.7 902.8,2066.3 911.1,2058.1 905.5 C2049.8 900.0,2046.1 869.7,2052.6 861.5 Z" fill="#b4d2a2"/>
<clipPath id="grn">
<path d="M1887.3 619.1 C1893.3 615.4,1904.3 615.4,1906.6 624.6 C1908.9 633.8,1904.3 656.7,1901.1 674.2 C1897.9 691.6,1891.4 710.9,1887.3 729.3 C1883.2 747.6,1879.5 767.8,1876.3 784.4 C1873.1 800.9,1870.8 817.0,1868.0 828.4 C1865.3 839.9,1863.4 851.4,1859.8 853.2 C1856.1 855.1,1847.8 852.8,1846.0 839.4 C1844.2 826.1,1846.5 797.2,1848.8 773.3 C1851.0 749.5,1856.1 717.3,1859.8 696.2 C1863.4 675.1,1866.2 659.5,1870.8 646.6 C1875.4 633.8,1881.3 622.8,1887.3 619.1 Z"/>
<path d="M1876.3 553.0 C1881.8 545.7,1913.9 547.5,1920.4 553.0 C1926.8 558.5,1920.4 578.7,1914.9 586.1 C1909.3 593.4,1893.7 602.6,1887.3 597.1 C1880.9 591.6,1870.8 560.3,1876.3 553.0 Z"/>
<path d="M1928.1 555.8 C1935.4 551.2,1965.6 551.6,1981.0 553.0 C1996.3 554.4,2017.3 559.1,2020.1 564.0 C2022.8 569.0,2011.3 580.0,1997.5 582.7 C1983.6 585.5,1948.5 585.0,1936.9 580.5 C1925.3 576.0,1920.7 560.3,1928.1 555.8 Z"/>
<path d="M1946.8 623.5 C1953.2 619.3,1981.5 619.3,1997.5 621.3 C2013.5 623.3,2038.1 631.0,2042.7 635.6 C2047.2 640.2,2039.0 647.0,2025.0 648.8 C2011.1 650.7,1972.0 650.9,1958.9 646.6 C1945.9 642.4,1940.4 627.7,1946.8 623.5 Z"/>
<path d="M2160.0 621.9 C2163.7 616.3,2184.3 615.0,2190.3 619.1 C2196.2 623.2,2199.5 641.1,2195.8 646.6 C2192.1 652.2,2174.2 656.3,2168.2 652.2 C2162.3 648.0,2156.3 627.4,2160.0 621.9 Z"/>
<path d="M2223.3 690.7 C2235.3 683.4,2276.6 678.8,2289.4 685.2 C2302.3 691.6,2307.8 719.2,2300.5 729.3 C2293.1 739.4,2259.1 745.8,2245.4 745.8 C2231.6 745.8,2221.5 738.5,2217.8 729.3 C2214.2 720.1,2211.4 698.1,2223.3 690.7 Z"/>
<path d="M2300.5 685.2 C2310.6 662.3,2337.2 664.1,2355.5 663.2 C2373.9 662.3,2396.9 670.5,2410.6 679.7 C2424.4 688.9,2435.4 702.6,2438.2 718.3 C2440.9 733.9,2433.6 757.7,2427.1 773.3 C2420.7 788.9,2411.5 800.9,2399.6 811.9 C2387.7 822.9,2370.2 833.0,2355.5 839.4 C2340.8 845.9,2321.6 856.9,2311.5 850.5 C2301.4 844.0,2296.8 828.4,2294.9 800.9 C2293.1 773.3,2290.4 708.2,2300.5 685.2 Z"/>
<path d="M2653.0 663.2 C2669.2 650.3,2761.3 633.8,2783.0 641.1 C2804.7 648.5,2799.2 694.4,2783.0 707.2 C2766.8 720.1,2707.7 725.6,2686.0 718.3 C2664.4 710.9,2636.8 676.0,2653.0 663.2 Z"/>
<path d="M2465.7 784.4 C2477.6 770.6,2512.5 766.9,2542.8 767.8 C2573.1 768.8,2607.5 790.8,2647.5 789.9 C2687.5 788.9,2760.4 750.4,2783.0 762.3 C2805.6 774.3,2799.2 846.8,2783.0 861.5 C2766.8 876.2,2716.0 854.1,2686.0 850.5 C2656.1 846.8,2631.0 837.6,2603.4 839.4 C2575.9 841.3,2542.8 859.6,2520.8 861.5 C2498.8 863.3,2480.4 863.3,2471.2 850.5 C2462.0 837.6,2453.8 798.1,2465.7 784.4 Z"/>
<path d="M2300.5 817.4 C2309.6 808.2,2337.2 808.2,2355.5 811.9 C2373.9 815.6,2403.3 827.5,2410.6 839.4 C2418.0 851.4,2410.6 875.2,2399.6 883.5 C2388.6 891.8,2361.0 891.8,2344.5 889.0 C2328.0 886.3,2307.8 878.9,2300.5 867.0 C2293.1 855.1,2291.3 826.6,2300.5 817.4 Z"/>
<path d="M2471.2 861.5 C2480.4 853.7,2509.8 852.3,2531.8 853.2 C2553.8 854.1,2593.3 858.3,2603.4 867.0 C2613.5 875.7,2606.2 897.3,2592.4 905.5 C2578.6 913.8,2540.1 917.5,2520.8 916.6 C2501.5 915.6,2485.0 909.2,2476.7 900.0 C2468.5 890.9,2462.0 869.3,2471.2 861.5 Z"/>
<path d="M2658.5 872.5 C2672.8 859.6,2762.3 850.5,2783.0 861.5 C2803.7 872.5,2797.3 925.7,2783.0 938.6 C2768.7 951.5,2717.8 949.6,2697.1 938.6 C2676.3 927.6,2644.2 885.3,2658.5 872.5 Z"/>
<path d="M2608.9 988.2 C2619.0 979.0,2657.0 972.6,2686.0 971.6 C2715.1 970.7,2766.8 969.8,2783.0 982.7 C2799.2 995.5,2799.2 1038.7,2783.0 1048.8 C2766.8 1058.9,2712.3 1046.9,2686.0 1043.3 C2659.8 1039.6,2638.3 1035.9,2625.5 1026.7 C2612.6 1017.6,2598.8 997.4,2608.9 988.2 Z"/>
<path d="M2104.9 949.6 C2112.7 937.7,2136.6 944.1,2146.2 933.1 C2155.9 922.1,2153.6 893.6,2162.7 883.5 C2171.9 873.4,2182.9 872.5,2201.3 872.5 C2219.7 872.5,2250.9 878.0,2272.9 883.5 C2294.9 889.0,2323.4 887.2,2333.5 905.5 C2343.6 923.9,2339.0 971.6,2333.5 993.7 C2328.0 1015.7,2315.1 1028.6,2300.5 1037.8 C2285.8 1046.9,2268.3 1046.0,2245.4 1048.8 C2222.4 1051.5,2184.8 1054.3,2162.7 1054.3 C2140.7 1054.3,2123.7 1057.0,2113.2 1048.8 C2102.6 1040.5,2100.8 1021.2,2099.4 1004.7 C2098.0 988.2,2097.1 961.6,2104.9 949.6 Z"/>
<path d="M1815.7 878.0 C1821.2 859.6,1843.2 863.3,1859.8 861.5 C1876.3 859.6,1905.7 854.1,1914.9 867.0 C1924.0 879.8,1909.3 924.8,1914.9 938.6 C1920.4 952.4,1934.1 944.1,1947.9 949.6 C1961.7 955.1,1984.6 964.3,1997.5 971.6 C2010.3 979.0,2019.5 980.8,2025.0 993.7 C2030.5 1006.5,2032.4 1031.3,2030.5 1048.8 C2028.7 1066.2,2022.3 1085.5,2014.0 1098.3 C2005.7 1111.2,1997.5 1120.4,1981.0 1125.9 C1964.4 1131.4,1935.1 1135.1,1914.9 1131.4 C1894.7 1127.7,1872.6 1114.0,1859.8 1103.9 C1846.9 1093.8,1844.2 1082.7,1837.7 1070.8 C1831.3 1058.9,1820.3 1043.3,1821.2 1032.2 C1822.1 1021.2,1842.3 1014.8,1843.2 1004.7 C1844.2 994.6,1831.3 992.8,1826.7 971.6 C1822.1 950.5,1810.2 896.4,1815.7 878.0 Z"/>
<path d="M1760.6 1043.3 C1769.8 1035.0,1810.2 1029.5,1821.2 1037.8 C1832.2 1046.0,1835.9 1084.6,1826.7 1092.8 C1817.5 1101.1,1777.1 1095.6,1766.1 1087.3 C1755.1 1079.1,1751.4 1051.5,1760.6 1043.3 Z"/>
<path d="M1584.3 1109.4 C1600.9 1101.2,1644.9 1102.9,1672.5 1103.9 C1700.0 1104.8,1734.9 1106.7,1749.6 1114.9 C1764.3 1123.0,1790.0 1146.5,1760.6 1152.9 C1731.2 1159.2,1602.7 1160.1,1573.3 1152.9 C1543.9 1145.6,1567.8 1117.5,1584.3 1109.4 Z"/>
<path d="M2052.6 861.5 C2059.0 853.2,2088.4 850.5,2096.6 856.0 C2104.9 861.5,2108.6 886.3,2102.1 894.5 C2095.7 902.8,2066.3 911.1,2058.1 905.5 C2049.8 900.0,2046.1 869.7,2052.6 861.5 Z"/>
</clipPath>
<g clip-path="url(#grn)"><rect x="1364" y="553" width="1419" height="600" filter="url(#stx)" opacity="0.22"/></g>
<path d="M2537.3 674.2 C2552.0 658.6,2610.8 661.3,2631.0 668.7 C2651.2 676.0,2656.7 699.0,2658.5 718.3 C2660.3 737.5,2655.8 771.5,2642.0 784.4 C2628.2 797.2,2592.4 799.0,2575.9 795.4 C2559.4 791.7,2549.3 782.5,2542.8 762.3 C2536.4 742.1,2522.6 689.8,2537.3 674.2 Z" fill="#b8cdae"/>
<path d="M2457.4 701.7 C2466.6 689.8,2503.8 689.8,2515.3 701.7 C2526.8 713.7,2529.1 759.6,2526.3 773.3 C2523.5 787.1,2509.8 784.4,2498.8 784.4 C2487.7 784.4,2467.1 787.1,2460.2 773.3 C2453.3 759.6,2448.3 713.7,2457.4 701.7 Z" fill="#d3efc8"/>
<path d="M2493.3 938.6 C2506.1 931.3,2550.2 933.1,2575.9 933.1 C2601.6 933.1,2638.3 931.3,2647.5 938.6 C2656.7 945.9,2647.5 968.9,2631.0 977.2 C2614.4 985.4,2570.4 988.2,2548.3 988.2 C2526.3 988.2,2507.9 985.4,2498.8 977.2 C2489.6 968.9,2480.4 945.9,2493.3 938.6 Z" fill="#cfe9b5"/>
<path d="M2146.2 949.6 C2153.6 938.6,2187.5 934.9,2201.3 938.6 C2215.1 942.3,2227.0 959.7,2228.8 971.6 C2230.7 983.6,2224.3 1004.7,2212.3 1010.2 C2200.4 1015.7,2168.2 1014.8,2157.2 1004.7 C2146.2 994.6,2138.9 960.6,2146.2 949.6 Z" fill="#c9e3ad"/>
<path d="M1898.3 1015.7 C1907.5 1006.5,1947.9 1001.0,1964.4 1004.7 C1981.0 1008.4,1989.2 1024.9,1997.5 1037.8 C2005.7 1050.6,2015.8 1070.8,2014.0 1081.8 C2012.2 1092.8,1998.4 1102.0,1986.5 1103.9 C1974.5 1105.7,1955.2 1100.2,1942.4 1092.8 C1929.5 1085.5,1916.7 1072.6,1909.3 1059.8 C1902.0 1046.9,1889.1 1024.9,1898.3 1015.7 Z" fill="#f7f8e0"/>
<path d="M1975.4 1048.8 C1981.0 1039.6,2006.7 1040.5,2014.0 1048.8 C2021.4 1057.0,2025.0 1089.2,2019.5 1098.3 C2014.0 1107.5,1988.3 1112.1,1981.0 1103.9 C1973.6 1095.6,1969.9 1057.9,1975.4 1048.8 Z" fill="#d5f2cf"/>
<path d="M1413.6 784.4 C1430.1 776.1,1496.2 765.1,1518.2 762.3 C1540.3 759.6,1534.8 762.3,1545.8 767.8 C1556.8 773.3,1578.8 783.4,1584.3 795.4 C1589.9 807.3,1588.0 830.3,1578.8 839.4 C1569.7 848.6,1548.5 850.5,1529.3 850.5 C1510.0 850.5,1481.5 845.9,1463.2 839.4 C1444.8 833.0,1427.3 821.1,1419.1 811.9 C1410.8 802.7,1397.1 792.6,1413.6 784.4 Z" fill="#ddf3d9" stroke="#b6e3b6" stroke-width="1.5"/>
<ellipse cx="1508" cy="811" rx="42" ry="15" transform="rotate(25 1508 811)" fill="#c8e3b4" stroke="#a5d6a8" stroke-width="2"/>
<path d="M1545.8 773.3 C1552.2 768.8,1577.9 768.8,1584.3 773.3 C1590.8 777.9,1590.8 796.3,1584.3 800.9 C1577.9 805.5,1552.2 805.5,1545.8 800.9 C1539.4 796.3,1539.4 777.9,1545.8 773.3 Z" fill="#f2d3cd"/>
<path d="M1727.0 605.0 C1722.5 614.2,1711.0 638.2,1700.0 660.0 C1689.0 681.8,1671.0 714.3,1661.0 736.0 C1651.0 757.7,1645.7 770.5,1640.0 790.0 C1634.3 809.5,1633.7 834.7,1627.0 853.0 C1620.3 871.3,1604.5 892.2,1600.0 900.0" stroke="#aac6d6" stroke-width="3" fill="none"/>
<path d="M1364.0 1031.0 C1365.5 1025.0,1369.2 1002.2,1373.0 995.0 C1376.8 987.8,1375.2 990.0,1387.0 988.0 C1398.8 986.0,1425.0 983.0,1444.0 983.0 C1463.0 983.0,1490.8 990.7,1501.0 988.0 C1511.2 985.3,1504.3 970.5,1505.0 967.0" stroke="#a8d3df" stroke-width="4.5" fill="none"/>
<path d="M1544 1072 C1555 1066,1585 1075,1604 1090 C1620 1100,1645 1106,1661 1111 C1640 1112,1610 1104,1592 1104 C1586 1120,1583 1140,1581 1153 L1563 1153 C1562 1130,1561 1115,1560 1104 C1556 1092,1549 1085,1544 1072 Z" fill="#aad3df"/>
<path d="M2447.0 637.0 C2454.5 639.0,2482.5 642.2,2492.0 649.0 C2501.5 655.8,2499.3 670.5,2504.0 678.0 C2508.7 685.5,2518.2 697.0,2520.0 694.0 C2521.8 691.0,2510.0 666.8,2515.0 660.0 C2520.0 653.2,2536.7 652.5,2550.0 653.0 C2563.3 653.5,2579.8 663.0,2595.0 663.0 C2610.2 663.0,2631.5 660.0,2641.0 653.0 C2650.5 646.0,2653.8 635.3,2652.0 621.0 C2650.2 606.7,2630.0 578.3,2630.0 567.0 C2630.0 555.7,2648.3 555.3,2652.0 553.0" stroke="#8fa3c8" stroke-width="3" fill="none" stroke-dasharray="6 3"/>
<path d="M2641.0 653.0 C2650.5 659.2,2677.2 685.0,2698.0 690.0 C2718.8 695.0,2751.8 689.5,2766.0 683.0 C2780.2 676.5,2780.2 656.3,2783.0 651.0" stroke="#8fa3c8" stroke-width="3" fill="none" stroke-dasharray="6 3"/>
<path d="M2197.0 740.0 C2201.7 735.5,2218.5 722.2,2225.0 713.0 C2231.5 703.8,2228.3 690.8,2236.0 685.0 C2243.7 679.2,2258.7 675.5,2271.0 678.0 C2283.3 680.5,2303.5 696.3,2310.0 700.0" stroke="#8fa3c8" stroke-width="2.5" fill="none" stroke-dasharray="5 3"/>
<path d="M1546.0 949.0 C1551.7 952.5,1570.5 959.3,1580.0 970.0 C1589.5 980.7,1601.3 999.7,1603.0 1013.0 C1604.7 1026.3,1602.5 1040.2,1590.0 1050.0 C1577.5 1059.8,1532.7 1062.0,1528.0 1072.0 C1523.3 1082.0,1556.3 1096.5,1562.0 1110.0 C1567.7 1123.5,1562.0 1145.8,1562.0 1153.0" stroke="#fff" stroke-width="4" fill="none"/>
<path d="M2065.0 1049.0 C2074.5 1052.8,2099.2 1071.2,2122.0 1072.0 C2144.8 1072.8,2177.2 1057.8,2202.0 1054.0 C2226.8 1050.2,2249.7 1051.3,2271.0 1049.0 C2292.3 1046.7,2320.2 1041.5,2330.0 1040.0" stroke="#fff" stroke-width="4" fill="none"/>
<path d="M2310.0 1000.0 C2325.0 1003.3,2371.7 1011.7,2400.0 1020.0 C2428.3 1028.3,2453.3 1050.0,2480.0 1050.0 C2506.7 1050.0,2536.7 1026.7,2560.0 1020.0 C2583.3 1013.3,2610.0 1011.7,2620.0 1010.0" stroke="#fff" stroke-width="4" fill="none"/>
<path d="M2536.0 681.0 C2544.0 684.2,2570.0 694.8,2584.0 700.0 C2598.0 705.2,2614.0 710.0,2620.0 712.0" stroke="#fff" stroke-width="4" fill="none"/>
<path d="M2560.0 620.0 C2568.3 617.5,2593.3 612.5,2610.0 605.0 C2626.7 597.5,2651.7 580.0,2660.0 575.0" stroke="#fff" stroke-width="4" fill="none"/>
<path d="M1565 864 L1700 925 L1837 1024 L1985 1150" stroke="#8c8c8c" stroke-width="4" fill="none" stroke-dasharray="11 7"/>
<path d="M1364.0 925.0 C1373.3 925.0,1404.0 918.3,1420.0 925.0 C1436.0 931.7,1445.0 954.2,1460.0 965.0 C1475.0 975.8,1497.5 981.7,1510.0 990.0 C1522.5 998.3,1525.0 1010.7,1535.0 1015.0 C1545.0 1019.3,1559.2 1015.2,1570.0 1016.0 C1580.8 1016.8,1586.7 1014.3,1600.0 1020.0 C1613.3 1025.7,1633.3 1040.8,1650.0 1050.0 C1666.7 1059.2,1683.3 1070.0,1700.0 1075.0 C1716.7 1080.0,1730.0 1080.8,1750.0 1080.0 C1770.0 1079.2,1808.3 1071.7,1820.0 1070.0" stroke="#b9a4c4" stroke-width="2.5" fill="none" stroke-dasharray="8 3 2 3"/>
<path d="M1540.0 720.0 C1543.3 715.0,1550.0 703.3,1560.0 690.0 C1570.0 676.7,1603.3 650.0,1600.0 640.0 C1596.7 630.0,1558.3 636.7,1540.0 630.0 C1521.7 623.3,1491.7 611.7,1490.0 600.0 C1488.3 588.3,1523.3 566.7,1530.0 560.0" stroke="#c6b4d0" stroke-width="2.2" fill="none" stroke-dasharray="8 3 2 3"/>
<path d="M1651.0 681.0 C1648.0 678.0,1640.8 669.8,1633.0 663.0 C1625.2 656.2,1612.3 642.0,1604.0 640.0 C1595.7 638.0,1587.2 646.5,1583.0 651.0 C1578.8 655.5,1583.2 662.8,1579.0 667.0 C1574.8 671.2,1567.2 672.2,1558.0 676.0 C1548.8 679.8,1531.2 685.3,1524.0 690.0 C1516.8 694.7,1514.3 696.8,1515.0 704.0 C1515.7 711.2,1526.5 724.7,1528.0 733.0 C1529.5 741.3,1528.5 748.2,1524.0 754.0 C1519.5 759.8,1508.7 767.7,1501.0 768.0 C1493.3 768.3,1485.7 756.0,1478.0 756.0 C1470.3 756.0,1466.3 765.3,1455.0 768.0 C1443.7 770.7,1419.2 768.3,1410.0 772.0 C1400.8 775.7,1399.0 784.7,1400.0 790.0 C1401.0 795.3,1414.3 796.7,1416.0 804.0 C1417.7 811.3,1413.7 825.8,1410.0 834.0 C1406.3 842.2,1400.5 847.2,1394.0 853.0 C1387.5 858.8,1372.7 862.8,1371.0 869.0 C1369.3 875.2,1382.2 883.2,1384.0 890.0 C1385.8 896.8,1377.7 905.2,1382.0 910.0 C1386.3 914.8,1408.0 915.2,1410.0 919.0 C1412.0 922.8,1401.7 928.8,1394.0 933.0 C1386.3 937.2,1369.0 942.2,1364.0 944.0" stroke="#e0b57c" stroke-width="9" fill="none" stroke-linecap="round" stroke-linejoin="round"/>
<path d="M1651.0 681.0 C1648.0 678.0,1640.8 669.8,1633.0 663.0 C1625.2 656.2,1612.3 642.0,1604.0 640.0 C1595.7 638.0,1587.2 646.5,1583.0 651.0 C1578.8 655.5,1583.2 662.8,1579.0 667.0 C1574.8 671.2,1567.2 672.2,1558.0 676.0 C1548.8 679.8,1531.2 685.3,1524.0 690.0 C1516.8 694.7,1514.3 696.8,1515.0 704.0 C1515.7 711.2,1526.5 724.7,1528.0 733.0 C1529.5 741.3,1528.5 748.2,1524.0 754.0 C1519.5 759.8,1508.7 767.7,1501.0 768.0 C1493.3 768.3,1485.7 756.0,1478.0 756.0 C1470.3 756.0,1466.3 765.3,1455.0 768.0 C1443.7 770.7,1419.2 768.3,1410.0 772.0 C1400.8 775.7,1399.0 784.7,1400.0 790.0 C1401.0 795.3,1414.3 796.7,1416.0 804.0 C1417.7 811.3,1413.7 825.8,1410.0 834.0 C1406.3 842.2,1400.5 847.2,1394.0 853.0 C1387.5 858.8,1372.7 862.8,1371.0 869.0 C1369.3 875.2,1382.2 883.2,1384.0 890.0 C1385.8 896.8,1377.7 905.2,1382.0 910.0 C1386.3 914.8,1408.0 915.2,1410.0 919.0 C1412.0 922.8,1401.7 928.8,1394.0 933.0 C1386.3 937.2,1369.0 942.2,1364.0 944.0" stroke="#f6d09a" stroke-width="7" fill="none" stroke-linecap="round" stroke-linejoin="round"/>
<path d="M2063.0 853.0 C2059.5 856.8,2045.8 865.3,2042.0 876.0 C2038.2 886.7,2037.3 907.8,2040.0 917.0 C2042.7 926.2,2059.2 926.0,2058.0 931.0 C2056.8 936.0,2036.7 941.0,2033.0 947.0 C2029.3 953.0,2032.2 959.8,2036.0 967.0 C2039.8 974.2,2050.0 980.2,2056.0 990.0 C2062.0 999.8,2070.8 1015.3,2072.0 1026.0 C2073.2 1036.7,2069.5 1047.5,2063.0 1054.0 C2056.5 1060.5,2039.2 1060.5,2033.0 1065.0 C2026.8 1069.5,2032.8 1073.3,2026.0 1081.0 C2019.2 1088.7,2006.0 1104.5,1992.0 1111.0 C1978.0 1117.5,1951.5 1115.8,1942.0 1120.0 C1932.5 1124.2,1939.2 1130.5,1935.0 1136.0 C1930.8 1141.5,1920.0 1150.2,1917.0 1153.0" stroke="#e0b57c" stroke-width="9" fill="none" stroke-linecap="round" stroke-linejoin="round"/>
<path d="M2063.0 853.0 C2059.5 856.8,2045.8 865.3,2042.0 876.0 C2038.2 886.7,2037.3 907.8,2040.0 917.0 C2042.7 926.2,2059.2 926.0,2058.0 931.0 C2056.8 936.0,2036.7 941.0,2033.0 947.0 C2029.3 953.0,2032.2 959.8,2036.0 967.0 C2039.8 974.2,2050.0 980.2,2056.0 990.0 C2062.0 999.8,2070.8 1015.3,2072.0 1026.0 C2073.2 1036.7,2069.5 1047.5,2063.0 1054.0 C2056.5 1060.5,2039.2 1060.5,2033.0 1065.0 C2026.8 1069.5,2032.8 1073.3,2026.0 1081.0 C2019.2 1088.7,2006.0 1104.5,1992.0 1111.0 C1978.0 1117.5,1951.5 1115.8,1942.0 1120.0 C1932.5 1124.2,1939.2 1130.5,1935.0 1136.0 C1930.8 1141.5,1920.0 1150.2,1917.0 1153.0" stroke="#f6d09a" stroke-width="7" fill="none" stroke-linecap="round" stroke-linejoin="round"/>
<path d="M2063.0 853.0 C2064.5 849.2,2068.8 838.8,2072.0 830.0 C2075.2 821.2,2080.3 805.0,2082.0 800.0" stroke="#e0b57c" stroke-width="9" fill="none" stroke-linecap="round" stroke-linejoin="round"/>
<path d="M2063.0 853.0 C2064.5 849.2,2068.8 838.8,2072.0 830.0 C2075.2 821.2,2080.3 805.0,2082.0 800.0" stroke="#f6d09a" stroke-width="7" fill="none" stroke-linecap="round" stroke-linejoin="round"/>
<path d="M2066.0 842.0 C2072.5 841.3,2088.5 839.3,2105.0 838.0 C2121.5 836.7,2155.0 834.7,2165.0 834.0" stroke="#e0b57c" stroke-width="13" fill="none" stroke-linecap="round" stroke-linejoin="round"/>
<path d="M2066.0 842.0 C2072.5 841.3,2088.5 839.3,2105.0 838.0 C2121.5 836.7,2155.0 834.7,2165.0 834.0" stroke="#f6d09a" stroke-width="11" fill="none" stroke-linecap="round" stroke-linejoin="round"/>
<path d="M1757.0 556.0 C1748.5 563.2,1724.0 583.5,1706.0 599.0 C1688.0 614.5,1661.8 635.3,1649.0 649.0 C1636.2 662.7,1636.5 669.2,1629.0 681.0 C1621.5 692.8,1610.2 707.2,1604.0 720.0 C1597.8 732.8,1594.7 745.8,1592.0 758.0 C1589.3 770.2,1588.3 777.2,1588.0 793.0 C1587.7 808.8,1588.3 836.8,1590.0 853.0 C1591.7 869.2,1596.7 883.8,1598.0 890.0" stroke="#d9d68f" stroke-width="8" fill="none" stroke-linecap="round" stroke-linejoin="round"/>
<path d="M1757.0 556.0 C1748.5 563.2,1724.0 583.5,1706.0 599.0 C1688.0 614.5,1661.8 635.3,1649.0 649.0 C1636.2 662.7,1636.5 669.2,1629.0 681.0 C1621.5 692.8,1610.2 707.2,1604.0 720.0 C1597.8 732.8,1594.7 745.8,1592.0 758.0 C1589.3 770.2,1588.3 777.2,1588.0 793.0 C1587.7 808.8,1588.3 836.8,1590.0 853.0 C1591.7 869.2,1596.7 883.8,1598.0 890.0" stroke="#f5f2a4" stroke-width="6" fill="none" stroke-linecap="round" stroke-linejoin="round"/>
<path d="M1889.0 553.0 C1891.7 554.8,1897.7 560.2,1905.0 564.0 C1912.3 567.8,1921.5 569.2,1933.0 576.0 C1944.5 582.8,1962.7 603.8,1974.0 605.0 C1985.3 606.2,1995.0 587.5,2001.0 583.0 C2007.0 578.5,2005.0 575.3,2010.0 578.0 C2015.0 580.7,2025.7 591.0,2031.0 599.0 C2036.3 607.0,2036.3 619.2,2042.0 626.0 C2047.7 632.8,2057.3 639.2,2065.0 640.0 C2072.7 640.8,2077.2 633.5,2088.0 631.0 C2098.8 628.5,2123.0 626.0,2130.0 625.0" stroke="#d9d68f" stroke-width="8" fill="none" stroke-linecap="round" stroke-linejoin="round"/>
<path d="M1889.0 553.0 C1891.7 554.8,1897.7 560.2,1905.0 564.0 C1912.3 567.8,1921.5 569.2,1933.0 576.0 C1944.5 582.8,1962.7 603.8,1974.0 605.0 C1985.3 606.2,1995.0 587.5,2001.0 583.0 C2007.0 578.5,2005.0 575.3,2010.0 578.0 C2015.0 580.7,2025.7 591.0,2031.0 599.0 C2036.3 607.0,2036.3 619.2,2042.0 626.0 C2047.7 632.8,2057.3 639.2,2065.0 640.0 C2072.7 640.8,2077.2 633.5,2088.0 631.0 C2098.8 628.5,2123.0 626.0,2130.0 625.0" stroke="#f5f2a4" stroke-width="6" fill="none" stroke-linecap="round" stroke-linejoin="round"/>
<path d="M2072.0 667.0 C2074.7 668.5,2087.2 672.2,2088.0 676.0 C2088.8 679.8,2082.7 685.8,2077.0 690.0 C2071.3 694.2,2055.2 694.8,2054.0 701.0 C2052.8 707.2,2067.3 722.7,2070.0 727.0" stroke="#d9d68f" stroke-width="8" fill="none" stroke-linecap="round" stroke-linejoin="round"/>
<path d="M2072.0 667.0 C2074.7 668.5,2087.2 672.2,2088.0 676.0 C2088.8 679.8,2082.7 685.8,2077.0 690.0 C2071.3 694.2,2055.2 694.8,2054.0 701.0 C2052.8 707.2,2067.3 722.7,2070.0 727.0" stroke="#f5f2a4" stroke-width="6" fill="none" stroke-linecap="round" stroke-linejoin="round"/>
<path d="M2385.0 553.0 C2389.7 557.5,2405.0 571.7,2413.0 580.0 C2421.0 588.3,2427.3 595.7,2433.0 603.0 C2438.7 610.3,2445.8 619.0,2447.0 624.0 C2448.2 629.0,2443.5 632.7,2440.0 633.0 C2436.5 633.3,2427.2 631.0,2426.0 626.0 C2424.8 621.0,2431.8 606.8,2433.0 603.0" stroke="#d9d68f" stroke-width="8" fill="none" stroke-linecap="round" stroke-linejoin="round"/>
<path d="M2385.0 553.0 C2389.7 557.5,2405.0 571.7,2413.0 580.0 C2421.0 588.3,2427.3 595.7,2433.0 603.0 C2438.7 610.3,2445.8 619.0,2447.0 624.0 C2448.2 629.0,2443.5 632.7,2440.0 633.0 C2436.5 633.3,2427.2 631.0,2426.0 626.0 C2424.8 621.0,2431.8 606.8,2433.0 603.0" stroke="#f5f2a4" stroke-width="6" fill="none" stroke-linecap="round" stroke-linejoin="round"/>
<path d="M2168.0 827.0 C2173.7 831.3,2195.5 848.2,2202.0 853.0 C2208.5 857.8,2191.5 853.8,2207.0 856.0 C2222.5 858.2,2273.2 862.5,2295.0 866.0 C2316.8 869.5,2327.7 871.8,2338.0 877.0 C2348.3 882.2,2346.7 889.0,2357.0 897.0 C2367.3 905.0,2385.7 925.0,2400.0 925.0 C2414.3 925.0,2439.7 904.5,2443.0 897.0 C2446.3 889.5,2423.8 882.8,2420.0 880.0" stroke="#d9d68f" stroke-width="8" fill="none" stroke-linecap="round" stroke-linejoin="round"/>
<path d="M2168.0 827.0 C2173.7 831.3,2195.5 848.2,2202.0 853.0 C2208.5 857.8,2191.5 853.8,2207.0 856.0 C2222.5 858.2,2273.2 862.5,2295.0 866.0 C2316.8 869.5,2327.7 871.8,2338.0 877.0 C2348.3 882.2,2346.7 889.0,2357.0 897.0 C2367.3 905.0,2385.7 925.0,2400.0 925.0 C2414.3 925.0,2439.7 904.5,2443.0 897.0 C2446.3 889.5,2423.8 882.8,2420.0 880.0" stroke="#f5f2a4" stroke-width="6" fill="none" stroke-linecap="round" stroke-linejoin="round"/>
<path d="M2404.0 749.0 C2404.2 753.8,2408.5 771.5,2405.0 778.0 C2401.5 784.5,2391.2 784.8,2383.0 788.0 C2374.8 791.2,2364.3 796.2,2356.0 797.0 C2347.7 797.8,2335.0 790.7,2333.0 793.0 C2331.0 795.3,2339.5 803.8,2344.0 811.0 C2348.5 818.2,2357.3 829.0,2360.0 836.0 C2362.7 843.0,2359.2 847.3,2360.0 853.0 C2360.8 858.7,2364.2 867.2,2365.0 870.0" stroke="#d9d68f" stroke-width="7" fill="none" stroke-linecap="round" stroke-linejoin="round"/>
<path d="M2404.0 749.0 C2404.2 753.8,2408.5 771.5,2405.0 778.0 C2401.5 784.5,2391.2 784.8,2383.0 788.0 C2374.8 791.2,2364.3 796.2,2356.0 797.0 C2347.7 797.8,2335.0 790.7,2333.0 793.0 C2331.0 795.3,2339.5 803.8,2344.0 811.0 C2348.5 818.2,2357.3 829.0,2360.0 836.0 C2362.7 843.0,2359.2 847.3,2360.0 853.0 C2360.8 858.7,2364.2 867.2,2365.0 870.0" stroke="#f5f2a4" stroke-width="5" fill="none" stroke-linecap="round" stroke-linejoin="round"/>
<path d="M1702.0 553.0 C1703.8 558.0,1710.7 575.3,1713.0 583.0 C1715.3 590.7,1719.0 592.5,1716.0 599.0 C1713.0 605.5,1704.2 612.5,1695.0 622.0 C1685.8 631.5,1669.3 646.2,1661.0 656.0 C1652.7 665.8,1652.7 671.5,1645.0 681.0 C1637.3 690.5,1621.8 702.0,1615.0 713.0 C1608.2 724.0,1606.3 735.7,1604.0 747.0 C1601.7 758.3,1601.0 763.3,1601.0 781.0 C1601.0 798.7,1603.2 836.5,1604.0 853.0 C1604.8 869.5,1610.2 871.7,1606.0 880.0 C1601.8 888.3,1586.7 896.0,1579.0 903.0 C1571.3 910.0,1562.3 915.8,1560.0 922.0 C1557.7 928.2,1559.7 936.7,1565.0 940.0 C1570.3 943.3,1578.0 944.0,1592.0 942.0 C1606.0 940.0,1633.7 926.8,1649.0 928.0 C1664.3 929.2,1676.3 940.5,1684.0 949.0 C1691.7 957.5,1689.0 968.3,1695.0 979.0 C1701.0 989.7,1710.5 1004.3,1720.0 1013.0 C1729.5 1021.7,1745.8 1024.2,1752.0 1031.0 C1758.2 1037.8,1758.8 1045.7,1757.0 1054.0 C1755.2 1062.3,1734.2 1071.5,1741.0 1081.0 C1747.8 1090.5,1780.0 1100.3,1798.0 1111.0 C1816.0 1121.7,1840.5 1139.3,1849.0 1145.0" stroke="#dc8296" stroke-width="17" fill="none" stroke-linecap="round" stroke-linejoin="round"/>
<path d="M1702.0 553.0 C1703.8 558.0,1710.7 575.3,1713.0 583.0 C1715.3 590.7,1719.0 592.5,1716.0 599.0 C1713.0 605.5,1704.2 612.5,1695.0 622.0 C1685.8 631.5,1669.3 646.2,1661.0 656.0 C1652.7 665.8,1652.7 671.5,1645.0 681.0 C1637.3 690.5,1621.8 702.0,1615.0 713.0 C1608.2 724.0,1606.3 735.7,1604.0 747.0 C1601.7 758.3,1601.0 763.3,1601.0 781.0 C1601.0 798.7,1603.2 836.5,1604.0 853.0 C1604.8 869.5,1610.2 871.7,1606.0 880.0 C1601.8 888.3,1586.7 896.0,1579.0 903.0 C1571.3 910.0,1562.3 915.8,1560.0 922.0 C1557.7 928.2,1559.7 936.7,1565.0 940.0 C1570.3 943.3,1578.0 944.0,1592.0 942.0 C1606.0 940.0,1633.7 926.8,1649.0 928.0 C1664.3 929.2,1676.3 940.5,1684.0 949.0 C1691.7 957.5,1689.0 968.3,1695.0 979.0 C1701.0 989.7,1710.5 1004.3,1720.0 1013.0 C1729.5 1021.7,1745.8 1024.2,1752.0 1031.0 C1758.2 1037.8,1758.8 1045.7,1757.0 1054.0 C1755.2 1062.3,1734.2 1071.5,1741.0 1081.0 C1747.8 1090.5,1780.0 1100.3,1798.0 1111.0 C1816.0 1121.7,1840.5 1139.3,1849.0 1145.0" stroke="#e99aaa" stroke-width="15" fill="none" stroke-linecap="round" stroke-linejoin="round"/>
<path d="M1798.0 564.0 C1791.7 567.5,1771.5 579.2,1760.0 585.0 C1748.5 590.8,1736.3 595.5,1729.0 599.0 C1721.7 602.5,1718.2 604.8,1716.0 606.0" stroke="#dc8296" stroke-width="14" fill="none" stroke-linecap="round" stroke-linejoin="round"/>
<path d="M1798.0 564.0 C1791.7 567.5,1771.5 579.2,1760.0 585.0 C1748.5 590.8,1736.3 595.5,1729.0 599.0 C1721.7 602.5,1718.2 604.8,1716.0 606.0" stroke="#e99aaa" stroke-width="12" fill="none" stroke-linecap="round" stroke-linejoin="round"/>
<path d="M1547.0 933.0 L1580.0 942.0" stroke="#dc8296" stroke-width="12" fill="none" stroke-linecap="round" stroke-linejoin="round"/>
<path d="M1547.0 933.0 L1580.0 942.0" stroke="#e99aaa" stroke-width="10" fill="none" stroke-linecap="round" stroke-linejoin="round"/>
<path d="M2150.0 553.0 C2147.3 556.0,2137.8 565.3,2134.0 571.0 C2130.2 576.7,2130.8 579.3,2127.0 587.0 C2123.2 594.7,2117.5 608.2,2111.0 617.0 C2104.5 625.8,2095.7 633.2,2088.0 640.0 C2080.3 646.8,2073.3 651.5,2065.0 658.0 C2056.7 664.5,2044.8 673.7,2038.0 679.0 C2031.2 684.3,2027.0 685.2,2024.0 690.0 C2021.0 694.8,2019.5 701.8,2020.0 708.0 C2020.5 714.2,2023.3 720.8,2027.0 727.0 C2030.7 733.2,2033.7 739.0,2042.0 745.0 C2050.3 751.0,2069.0 757.7,2077.0 763.0 C2085.0 768.3,2087.0 771.7,2090.0 777.0 C2093.0 782.3,2091.5 787.5,2095.0 795.0 C2098.5 802.5,2107.5 815.8,2111.0 822.0 C2114.5 828.2,2115.2 830.3,2116.0 832.0" stroke="#dc8296" stroke-width="15" fill="none" stroke-linecap="round" stroke-linejoin="round"/>
<path d="M2150.0 553.0 C2147.3 556.0,2137.8 565.3,2134.0 571.0 C2130.2 576.7,2130.8 579.3,2127.0 587.0 C2123.2 594.7,2117.5 608.2,2111.0 617.0 C2104.5 625.8,2095.7 633.2,2088.0 640.0 C2080.3 646.8,2073.3 651.5,2065.0 658.0 C2056.7 664.5,2044.8 673.7,2038.0 679.0 C2031.2 684.3,2027.0 685.2,2024.0 690.0 C2021.0 694.8,2019.5 701.8,2020.0 708.0 C2020.5 714.2,2023.3 720.8,2027.0 727.0 C2030.7 733.2,2033.7 739.0,2042.0 745.0 C2050.3 751.0,2069.0 757.7,2077.0 763.0 C2085.0 768.3,2087.0 771.7,2090.0 777.0 C2093.0 782.3,2091.5 787.5,2095.0 795.0 C2098.5 802.5,2107.5 815.8,2111.0 822.0 C2114.5 828.2,2115.2 830.3,2116.0 832.0" stroke="#e99aaa" stroke-width="13" fill="none" stroke-linecap="round" stroke-linejoin="round"/>
<path d="M2015.0 672.0 L2038.0 679.0" stroke="#dc8296" stroke-width="11" fill="none" stroke-linecap="round" stroke-linejoin="round"/>
<path d="M2015.0 672.0 L2038.0 679.0" stroke="#e99aaa" stroke-width="9" fill="none" stroke-linecap="round" stroke-linejoin="round"/>
<rect x="1723" y="1052" width="40" height="24" rx="3" fill="#f2d7dd" stroke="#d9a9b5" stroke-width="1.5"/><text x="1743" y="1070" font-size="16" text-anchor="middle" fill="#555" font-family="Liberation Sans">T-1</text>
<rect x="1994" y="1081" width="40" height="25" rx="3" fill="#f6e1c8" stroke="#d9bf9a" stroke-width="1.5"/><text x="2014" y="1099" font-size="16" text-anchor="middle" fill="#555" font-family="Liberation Sans">L-9</text>
<rect x="2246" y="1084" width="47" height="25" rx="3" fill="#f2f2f2" stroke="#cfcfcf" stroke-width="1.5"/><text x="2269" y="1102" font-size="16" text-anchor="middle" fill="#555" font-family="Liberation Sans">R-49</text>
<path d="M1364 746.5 H2783 M1364 1130.5 H2783 M2334.5 553 V1153 M2718 553 V1153" stroke="#fff" stroke-width="1" opacity="0.6"/>
<text x="2038.8" y="566.8" font-size="19" fill="#555" font-family="Liberation Sans" stroke="#fff" stroke-width="3" stroke-opacity="0.6" paint-order="stroke">Santa Fe</text>
<text x="2124.2" y="588.8" font-size="19" fill="#555" font-family="Liberation Sans" stroke="#fff" stroke-width="3" stroke-opacity="0.6" paint-order="stroke">Santa Inés</text>
<text x="2394.1" y="571.2" font-size="19" fill="#555" font-family="Liberation Sans" stroke="#fff" stroke-width="3" stroke-opacity="0.6" paint-order="stroke">El Cafetal</text>
<text x="2735.6" y="581.6" font-size="19" fill="#555" font-family="Liberation Sans" stroke="#fff" stroke-width="3" stroke-opacity="0.6" paint-order="stroke">Carpi</text>
<text x="1887.3" y="591.6" font-size="19" fill="#555" font-family="Liberation Sans" stroke="#fff" stroke-width="3" stroke-opacity="0.6" paint-order="stroke">Cumbres de</text>
<text x="1903.8" y="614.7" font-size="19" fill="#555" font-family="Liberation Sans" stroke="#fff" stroke-width="3" stroke-opacity="0.6" paint-order="stroke">Curumo</text>
<text x="2245.4" y="628.5" font-size="19" fill="#555" font-family="Liberation Sans" stroke="#fff" stroke-width="3" stroke-opacity="0.6" paint-order="stroke">Vizcaya</text>
<text x="1610.2" y="616.3" font-size="19" fill="#555" font-family="Liberation Sans" stroke="#fff" stroke-width="3" stroke-opacity="0.6" paint-order="stroke">Los Jardines</text>
<text x="1618.5" y="639.5" font-size="19" fill="#555" font-family="Liberation Sans" stroke="#fff" stroke-width="3" stroke-opacity="0.6" paint-order="stroke">de El Valle</text>
<text x="1656.0" y="695.1" font-size="19" fill="#555" font-family="Liberation Sans" stroke="#fff" stroke-width="3" stroke-opacity="0.6" paint-order="stroke">Fuerte Tiuna</text>
<text x="1540.3" y="723.8" font-size="19" fill="#555" font-family="Liberation Sans" stroke="#fff" stroke-width="3" stroke-opacity="0.6" paint-order="stroke">Coche</text>
<text x="1905.5" y="706.1" font-size="19" fill="#555" font-family="Liberation Sans" stroke="#fff" stroke-width="3" stroke-opacity="0.6" paint-order="stroke">Prados del</text>
<text x="1932.5" y="729.3" font-size="19" fill="#555" font-family="Liberation Sans" stroke="#fff" stroke-width="3" stroke-opacity="0.6" paint-order="stroke">Este</text>
<text x="2603.4" y="716.6" font-size="19" fill="#555" font-family="Liberation Sans" stroke="#fff" stroke-width="3" stroke-opacity="0.6" paint-order="stroke">Las Canteras</text>
<text x="1432.9" y="834.5" font-size="19" fill="#555" font-family="Liberation Sans" stroke="#fff" stroke-width="3" stroke-opacity="0.6" paint-order="stroke">La Rinconada</text>
<text x="1837.7" y="791.5" font-size="19" fill="#555" font-family="Liberation Sans" stroke="#fff" stroke-width="3" stroke-opacity="0.6" paint-order="stroke">Alto Prado</text>
<text x="2022.3" y="836.7" font-size="19" fill="#555" font-family="Liberation Sans" stroke="#fff" stroke-width="3" stroke-opacity="0.6" paint-order="stroke">Baruta</text>
<text x="2113.2" y="858.7" font-size="19" fill="#555" font-family="Liberation Sans" stroke="#fff" stroke-width="3" stroke-opacity="0.6" paint-order="stroke">La Trinidad</text>
<text x="2190.3" y="826.8" font-size="19" fill="#555" font-family="Liberation Sans" stroke="#fff" stroke-width="3" stroke-opacity="0.6" paint-order="stroke">La Tahona</text>
<text x="2294.9" y="799.2" font-size="19" fill="#555" font-family="Liberation Sans" stroke="#fff" stroke-width="3" stroke-opacity="0.6" paint-order="stroke">Los Naranjos</text>
<text x="2460.2" y="831.2" font-size="19" fill="#555" font-family="Liberation Sans" stroke="#fff" stroke-width="3" stroke-opacity="0.6" paint-order="stroke">Alto Hatillo</text>
<text x="1578.8" y="908.3" font-size="19" fill="#555" font-family="Liberation Sans" stroke="#fff" stroke-width="3" stroke-opacity="0.6" paint-order="stroke">Ciudad Tiuna</text>
<text x="1873.5" y="870.8" font-size="19" fill="#555" font-family="Liberation Sans" stroke="#fff" stroke-width="3" stroke-opacity="0.6" paint-order="stroke">Urbanización</text>
<text x="1879.0" y="894.0" font-size="19" fill="#555" font-family="Liberation Sans" stroke="#fff" stroke-width="3" stroke-opacity="0.6" paint-order="stroke">Manzanares</text>
<text x="2289.4" y="912.2" font-size="19" fill="#555" font-family="Liberation Sans" stroke="#fff" stroke-width="3" stroke-opacity="0.6" paint-order="stroke">La Boyera</text>
<text x="2424.4" y="930.3" font-size="19" fill="#555" font-family="Liberation Sans" stroke="#fff" stroke-width="3" stroke-opacity="0.6" paint-order="stroke">El Hatillo</text>
<text x="2559.4" y="932.0" font-size="19" fill="#555" font-family="Liberation Sans" stroke="#fff" stroke-width="3" stroke-opacity="0.6" paint-order="stroke">La Lagunita</text>
<text x="2403.5" y="967.8" font-size="19" fill="#555" font-family="Liberation Sans" stroke="#fff" stroke-width="3" stroke-opacity="0.6" paint-order="stroke">Las Marías</text>
<text x="2358.3" y="1003.0" font-size="19" fill="#555" font-family="Liberation Sans" stroke="#fff" stroke-width="3" stroke-opacity="0.6" paint-order="stroke">Oripoto</text>
<text x="2493.3" y="1036.1" font-size="19" fill="#555" font-family="Liberation Sans" stroke="#fff" stroke-width="3" stroke-opacity="0.6" paint-order="stroke">La Unión</text>
<text x="1554.0" y="1011.9" font-size="19" fill="#555" font-family="Liberation Sans" stroke="#fff" stroke-width="3" stroke-opacity="0.6" paint-order="stroke">La Mariposa</text>
<text x="1462.1" y="1055.4" font-size="19" fill="#555" font-family="Liberation Sans" stroke="#fff" stroke-width="3" stroke-opacity="0.6" paint-order="stroke">El Cují</text>
<text x="1364.0" y="1068.0" font-size="19" fill="#555" font-family="Liberation Sans" stroke="#fff" stroke-width="3" stroke-opacity="0.6" paint-order="stroke">roa</text>
<text x="1384.4" y="1128.6" font-size="19" fill="#555" font-family="Liberation Sans" stroke="#fff" stroke-width="3" stroke-opacity="0.6" paint-order="stroke">Urbanización</text>
<text x="1398.2" y="1150.7" font-size="19" fill="#555" font-family="Liberation Sans" stroke="#fff" stroke-width="3" stroke-opacity="0.6" paint-order="stroke">Peña Baja</text>
<text x="2664.0" y="1125.9" font-size="19" fill="#555" font-family="Liberation Sans" stroke="#fff" stroke-width="3" stroke-opacity="0.6" paint-order="stroke">Margarita</text>
<text x="2757.7" y="783.3" font-size="19" fill="#555" font-family="Liberation Sans" stroke="#fff" stroke-width="3" stroke-opacity="0.6" paint-order="stroke">Case</text>
<text x="2768.7" y="806.4" font-size="19" fill="#555" font-family="Liberation Sans" stroke="#fff" stroke-width="3" stroke-opacity="0.6" paint-order="stroke">Na</text>
<text x="1457.6" y="572.3" font-size="16" fill="#8b6d55" font-family="Liberation Sans" stroke="#fff" stroke-width="3" stroke-opacity="0.6" paint-order="stroke">1215 m</text>
<text x="1546.9" y="575.0" font-size="16" fill="#8b6d55" font-family="Liberation Sans" stroke="#fff" stroke-width="3" stroke-opacity="0.6" paint-order="stroke">Cerro El</text>
<text x="1558.5" y="593.2" font-size="16" fill="#8b6d55" font-family="Liberation Sans" stroke="#fff" stroke-width="3" stroke-opacity="0.6" paint-order="stroke">Valle</text>
<text x="1548.5" y="610.8" font-size="16" fill="#8b6d55" font-family="Liberation Sans" stroke="#fff" stroke-width="3" stroke-opacity="0.6" paint-order="stroke">1225 m</text>
<text x="1456.5" y="667.6" font-size="16" fill="#8b6d55" font-family="Liberation Sans" stroke="#fff" stroke-width="3" stroke-opacity="0.6" paint-order="stroke">Topo Las</text>
<text x="1465.9" y="685.2" font-size="16" fill="#8b6d55" font-family="Liberation Sans" stroke="#fff" stroke-width="3" stroke-opacity="0.6" paint-order="stroke">Torres</text>
<text x="1397.1" y="748.6" font-size="16" fill="#8b6d55" font-family="Liberation Sans" stroke="#fff" stroke-width="3" stroke-opacity="0.6" paint-order="stroke">Topo Los</text>
<text x="1399.8" y="766.2" font-size="16" fill="#8b6d55" font-family="Liberation Sans" stroke="#fff" stroke-width="3" stroke-opacity="0.6" paint-order="stroke">Mangos</text>
<text x="1819.0" y="980.5" font-size="16" fill="#8b6d55" font-family="Liberation Sans" stroke="#fff" stroke-width="3" stroke-opacity="0.6" paint-order="stroke">Cerro Tucupe</text>
<text x="1821.2" y="1059.8" font-size="16" fill="#8b6d55" font-family="Liberation Sans" stroke="#fff" stroke-width="3" stroke-opacity="0.6" paint-order="stroke">Topo Las</text>
<text x="1828.4" y="1077.4" font-size="16" fill="#8b6d55" font-family="Liberation Sans" stroke="#fff" stroke-width="3" stroke-opacity="0.6" paint-order="stroke">Caritas</text>
<text x="1629.5" y="1077.4" font-size="16" fill="#8b6d55" font-family="Liberation Sans" stroke="#fff" stroke-width="3" stroke-opacity="0.6" paint-order="stroke">Topo La</text>
<text x="1624.0" y="1095.6" font-size="16" fill="#8b6d55" font-family="Liberation Sans" stroke="#fff" stroke-width="3" stroke-opacity="0.6" paint-order="stroke">Mariposa</text>
<text x="2084.0" y="1093.9" font-size="16" fill="#8b6d55" font-family="Liberation Sans" stroke="#fff" stroke-width="3" stroke-opacity="0.6" paint-order="stroke">Topo La</text>
<text x="2084.0" y="1111.6" font-size="16" fill="#8b6d55" font-family="Liberation Sans" stroke="#fff" stroke-width="3" stroke-opacity="0.6" paint-order="stroke">Chivera</text>
<text x="2216.7" y="1013.0" font-size="16" fill="#8b6d55" font-family="Liberation Sans" stroke="#fff" stroke-width="3" stroke-opacity="0.6" paint-order="stroke">Cerro El</text>
<text x="2220.6" y="1030.6" font-size="16" fill="#8b6d55" font-family="Liberation Sans" stroke="#fff" stroke-width="3" stroke-opacity="0.6" paint-order="stroke">Volcán</text>
<text x="2219.5" y="1048.2" font-size="16" fill="#8b6d55" font-family="Liberation Sans" stroke="#fff" stroke-width="3" stroke-opacity="0.6" paint-order="stroke">1493 m</text>
<text x="2509.8" y="879.7" font-size="16" fill="#8b6d55" font-family="Liberation Sans" stroke="#fff" stroke-width="3" stroke-opacity="0.6" paint-order="stroke">Topo Santa</text>
<text x="2531.8" y="897.8" font-size="16" fill="#8b6d55" font-family="Liberation Sans" stroke="#fff" stroke-width="3" stroke-opacity="0.6" paint-order="stroke">Rosa</text>
<text x="2465.7" y="743.0" font-size="16" fill="#8b6d55" font-family="Liberation Sans" stroke="#fff" stroke-width="3" stroke-opacity="0.6" paint-order="stroke">Loma del</text>
<text x="2479.5" y="760.7" font-size="16" fill="#8b6d55" font-family="Liberation Sans" stroke="#fff" stroke-width="3" stroke-opacity="0.6" paint-order="stroke">Indio</text>
<text x="2608.9" y="814.7" font-size="16" fill="#8b6d55" font-family="Liberation Sans" stroke="#fff" stroke-width="3" stroke-opacity="0.6" paint-order="stroke">Topo Tucusiapón</text>
<text x="2729.0" y="946.9" font-size="16" fill="#8b6d55" font-family="Liberation Sans" stroke="#fff" stroke-width="3" stroke-opacity="0.6" paint-order="stroke">Alto Lor</text>
<text x="2741.1" y="965.0" font-size="16" fill="#8b6d55" font-family="Liberation Sans" stroke="#fff" stroke-width="3" stroke-opacity="0.6" paint-order="stroke">Linda</text>
<text x="2677.8" y="1097.2" font-size="16" fill="#8b6d55" font-family="Liberation Sans" stroke="#fff" stroke-width="3" stroke-opacity="0.6" paint-order="stroke">Alto La</text>
<text x="2677.8" y="1114.9" font-size="16" fill="#8b6d55" font-family="Liberation Sans" stroke="#fff" stroke-width="3" stroke-opacity="0.6" paint-order="stroke">Unión</text>
<text x="2746.6" y="749.7" font-size="16" fill="#8b6d55" font-family="Liberation Sans" stroke="#fff" stroke-width="3" stroke-opacity="0.6" paint-order="stroke">Topo</text>
<text x="2771.4" y="765.1" font-size="16" fill="#8b6d55" font-family="Liberation Sans" stroke="#fff" stroke-width="3" stroke-opacity="0.6" paint-order="stroke">10</text>
<text x="1755.1" y="565.7" font-size="15" fill="#b0505e" font-style="italic" font-family="Liberation Sans" stroke="#fff" stroke-width="3" stroke-opacity="0.6" paint-order="stroke">El Valle</text>
<text x="1771.6" y="580.5" font-size="15" fill="#b0505e" font-style="italic" font-family="Liberation Sans" stroke="#fff" stroke-width="3" stroke-opacity="0.6" paint-order="stroke">7</text>
<text x="1613.0" y="689.6" font-size="15" fill="#b0505e" font-style="italic" font-family="Liberation Sans" stroke="#fff" stroke-width="3" stroke-opacity="0.6" paint-order="stroke">Coche</text>
<text x="1622.9" y="707.2" font-size="15" fill="#b0505e" font-style="italic" font-family="Liberation Sans" stroke="#fff" stroke-width="3" stroke-opacity="0.6" paint-order="stroke">1-C</text>
<text x="2058.1" y="628.5" font-size="15" fill="#b0505e" font-style="italic" font-family="Liberation Sans" stroke="#fff" stroke-width="3" stroke-opacity="0.6" paint-order="stroke">Los Campitos</text>
<text x="2096.6" y="645.5" font-size="15" fill="#b0505e" font-style="italic" font-family="Liberation Sans" stroke="#fff" stroke-width="3" stroke-opacity="0.6" paint-order="stroke">3</text>
<text x="2005.7" y="663.2" font-size="15" fill="#b0505e" font-style="italic" font-family="Liberation Sans" stroke="#fff" stroke-width="3" stroke-opacity="0.6" paint-order="stroke">Prados del Este</text>
<text x="2044.3" y="680.8" font-size="15" fill="#b0505e" font-style="italic" font-family="Liberation Sans" stroke="#fff" stroke-width="3" stroke-opacity="0.6" paint-order="stroke">5-B</text>
<text x="1614.6" y="923.7" font-size="15" fill="#b0505e" font-style="italic" font-family="Liberation Sans" stroke="#fff" stroke-width="3" stroke-opacity="0.6" paint-order="stroke">Core 5 GN</text>
<text x="1644.9" y="941.4" font-size="15" fill="#b0505e" font-style="italic" font-family="Liberation Sans" stroke="#fff" stroke-width="3" stroke-opacity="0.6" paint-order="stroke">2</text>
<text x="1648.8" y="977.2" font-size="15" fill="#b0505e" font-style="italic" font-family="Liberation Sans" stroke="#fff" stroke-width="3" stroke-opacity="0.6" paint-order="stroke">Bosque Valle</text>
<text x="1812.9" y="1152.9" font-size="15" fill="#b0505e" font-style="italic" font-family="Liberation Sans" stroke="#fff" stroke-width="3" stroke-opacity="0.6" paint-order="stroke">Hoyo de La Puerta</text>
<text x="1895.6" y="1022.9" font-size="15" fill="#6f7352" font-style="italic" font-family="Liberation Sans" stroke="#fff" stroke-width="3" stroke-opacity="0.6" paint-order="stroke">Universidad</text>
<text x="1913.8" y="1040.5" font-size="15" fill="#6f7352" font-style="italic" font-family="Liberation Sans" stroke="#fff" stroke-width="3" stroke-opacity="0.6" paint-order="stroke">Simón</text>
<text x="1911.0" y="1058.7" font-size="15" fill="#6f7352" font-style="italic" font-family="Liberation Sans" stroke="#fff" stroke-width="3" stroke-opacity="0.6" paint-order="stroke">Bolivar</text>
<text x="2190.3" y="963.4" font-size="15" fill="#6f7352" font-style="italic" font-family="Liberation Sans" stroke="#fff" stroke-width="3" stroke-opacity="0.6" paint-order="stroke">Cerro El</text>
<text x="2193.0" y="981.0" font-size="15" fill="#6f7352" font-style="italic" font-family="Liberation Sans" stroke="#fff" stroke-width="3" stroke-opacity="0.6" paint-order="stroke">Volcán</text>
<text x="2363.8" y="857.1" font-size="13" fill="#555" transform="rotate(28 2363.8 857.1)" font-family="Liberation Sans" stroke="#fff" stroke-width="3" stroke-opacity="0.6" paint-order="stroke">Vía Seminario</text>
<g fill="#c88a55">
<path d="M1573 549 L1581 561 L1565 561Z"/>
<path d="M1601 549 L1609 561 L1593 561Z"/>
<path d="M1488 639 L1496 651 L1480 651Z"/>
<path d="M1426 720 L1434 732 L1418 732Z"/>
<path d="M1367 746 L1375 758 L1359 758Z"/>
<path d="M1534 1003 L1542 1015 L1526 1015Z"/>
<path d="M1656 1047 L1664 1059 L1648 1059Z"/>
<path d="M1816 927 L1824 939 L1808 939Z"/>
<path d="M1866 951 L1874 963 L1858 963Z"/>
<path d="M1853 1030 L1861 1042 L1845 1042Z"/>
<path d="M2110 1064 L2118 1076 L2102 1076Z"/>
<path d="M2244 984 L2252 996 L2236 996Z"/>
<path d="M2547 850 L2555 862 L2539 862Z"/>
<path d="M2496 710 L2504 722 L2488 722Z"/>
<path d="M2667 786 L2675 798 L2659 798Z"/>
<path d="M2405 966 L2413 978 L2397 978Z"/>
<path d="M2686 1069 L2694 1081 L2678 1081Z"/>
<path d="M2763 920 L2771 932 L2755 932Z"/>
</g>
<path d="M2074.0,849.0 2081.0,846.0 2082.0,838.0 2093.0,837.0 2093.0,848.0 2127.0,845.0 2161.0,838.0 2163.0,809.0 2170.0,800.0 2177.0,804.0 2186.0,794.0 2191.0,800.0 2190.0,818.0 2209.0,830.0 2225.0,818.0 2239.0,812.0 2248.0,814.0 2259.0,829.0 2271.0,825.0 2287.0,825.0 2284.0,813.0 2294.0,800.0 2310.0,790.0 2333.0,788.0 2356.0,797.0 2383.0,788.0 2405.0,778.0 2405.0,749.0 2415.0,745.0 2429.0,730.0 2422.0,715.0 2433.0,699.0 2434.0,681.0 2429.0,680.0" stroke="#0a0ae6" stroke-width="5" fill="none" stroke-linejoin="round" stroke-linecap="round"/>
<path d="M2411 706 L2423 689" stroke="#0a0ae6" stroke-width="5" stroke-dasharray="3 2"/>
<defs><linearGradient id="mg" x1="0" y1="0" x2="0" y2="1"><stop offset="0" stop-color="#5c9ad6"/><stop offset="1" stop-color="#3876c4"/></linearGradient></defs>
<ellipse cx="2440" cy="672" rx="16" ry="9" fill="#000" opacity="0.15" filter="url(#blur1)"/>
<ellipse cx="2092" cy="832" rx="16" ry="9" fill="#000" opacity="0.12" filter="url(#blur1)"/>
<g transform="translate(2403.25,629.0) scale(1.5)"><path d="M12.5 0.8 C5.9 0.8 0.8 6 0.8 12.6 C0.8 15.2 1.6 17.3 2.7 19.3 L12.5 40.2 L22.3 19.3 C23.4 17.3 24.2 15.2 24.2 12.6 C24.2 6 19.1 0.8 12.5 0.8 Z" fill="url(#mg)" stroke="#2d6aa6" stroke-width="1"/><circle cx="12.5" cy="12.5" r="5.2" fill="#3a78b8" opacity="0.6"/><circle cx="12.5" cy="12.5" r="4.3" fill="#fff"/></g>
<g transform="translate(2055.65,790.5) scale(1.5)"><path d="M12.5 0.8 C5.9 0.8 0.8 6 0.8 12.6 C0.8 15.2 1.6 17.3 2.7 19.3 L12.5 40.2 L22.3 19.3 C23.4 17.3 24.2 15.2 24.2 12.6 C24.2 6 19.1 0.8 12.5 0.8 Z" fill="url(#mg)" stroke="#2d6aa6" stroke-width="1"/><circle cx="12.5" cy="12.5" r="5.2" fill="#3a78b8" opacity="0.6"/><circle cx="12.5" cy="12.5" r="4.3" fill="#fff"/></g>
</svg>
<div style="position:absolute;left:212px;top:234px;width:465px;height:47px;background:rgba(255,255,255,0.9);border-radius:4px;box-shadow:0 1px 3px rgba(0,0,0,0.35)"></div>
<div style="position:absolute;left:676px;top:250px;width:0;height:0;border-top:7px solid transparent;border-bottom:7px solid transparent;border-left:8px solid rgba(255,255,255,0.9)"></div>
<div class="a" style="left:221.5px;top:248.8px;font-size:18px;color:#333">Origen: Centro Expreso Baruta, Caracas 1080, Miranda</div>
<div style="position:absolute;left:839px;top:73.5px;width:186px;height:46.5px;background:rgba(255,255,255,0.9);border-radius:4px;box-shadow:0 1px 3px rgba(0,0,0,0.35)"></div>
<div style="position:absolute;left:1024.7px;top:90px;width:0;height:0;border-top:7px solid transparent;border-bottom:7px solid transparent;border-left:8px solid rgba(255,255,255,0.9)"></div>
<div class="a" style="left:849px;top:88.8px;font-size:17.8px;color:#333">Destino: Maria Perez</div>
<div style="position:absolute;left:15.5px;top:15px;width:50px;height:96px;border:2.5px solid rgba(0,0,0,0.25);border-radius:6px;background:#fff;background-clip:padding-box"></div>
<div style="position:absolute;left:18px;top:62px;width:45px;height:1px;background:#ccc"></div>
<div style="position:absolute;left:32px;top:43px;width:18.8px;height:3.6px;background:#000"></div>
<div style="position:absolute;left:39.6px;top:35px;width:3.6px;height:19px;background:#000"></div>
<div style="position:absolute;left:32px;top:86.5px;width:18.8px;height:4px;background:#000"></div>
<div style="position:absolute;left:1063px;top:573.5px;width:356px;height:26.5px;background:rgba(255,255,255,0.8)"></div>
<svg style="position:absolute;left:1070px;top:581px" width="19" height="12" viewBox="0 0 19 12"><rect width="19" height="6" fill="#4c7be1"/><rect y="6" width="19" height="6" fill="#ffd500"/></svg>
<div class="a" style="left:1094.4px;top:577.4px;font-size:17.8px;color:#333"><span style="color:#0078a8">Leaflet</span> | © <span style="color:#0078a8">OpenStreetMap</span> contributors</div>

</div><!--/MAP-->

<div style="position:absolute;left:1960px;top:1177px;width:227px;height:60px;background:#ed7431;border-radius:30px"></div>
<svg style="position:absolute;left:1982px;top:1194px" width="28" height="26" viewBox="0 0 28 26" fill="none" stroke="#fff" stroke-width="1.7"><path d="M2 13 C6 7,10 5,14 5 C18 5,22 7,26 13 C22 19,18 21,14 21 C10 21,6 19,2 13 Z"/><circle cx="14" cy="13" r="4"/><path d="M21 2 L5 24"/></svg>
<div class="a" style="left:2020px;top:1194px;font-size:23.8px;color:#fff">Ocultar Mapa</div>
<div style="position:absolute;left:1364px;top:1273px;width:1419px;height:1px;background:#f0f0f0"></div>
<div class="a b" style="left:1365px;top:1361px;font-size:26.9px">Estado y Fechas</div>
<div class="a b" style="left:1365px;top:1412px;font-size:24px">Estado:</div>
<div style="position:absolute;left:1460px;top:1410px;width:92px;height:35px;border-radius:8px;background:#f5f5f5"></div>
<div class="a" style="left:1470px;top:1416px;font-size:21px;color:#fafafa">Creado</div>
<div class="a" style="left:2510px;top:1412px;font-size:24px"><b>Vehiculo:</b> Moto</div>

<svg style="position:absolute;left:2686px;top:1392px" width="98" height="54" viewBox="0 0 98 54">
  <path d="M16 14.9 L20.5 12 L33.5 13.4 C36 17,40 19,45 18 C50 11,57 7.9,64 7 C70 6.5,75 8,77 11 L78.6 17 L78 20 L74 21 L62.6 35.9 L39.4 41 L36.5 31.6 L26.3 21.4 Z" fill="#e2703a"/>
  <path d="M16 14.9 L20.5 12 L33.5 13.4 L30 20 L24 21 Z" fill="#c4562a"/>
  <path d="M33.5 13.4 C36 17,40 19,45 18 L44 21.5 C39 22.5,35 20.5,32 17 Z" fill="#3a3a3a"/>
  <path d="M64 3.2 L71 3.2 L76.5 13.5 L70 15 Z" fill="#bfe0e8"/>
  <path d="M74 20.7 L84.5 20.7 L82.5 24.3 L74 24.3 Z" fill="#e2703a"/>
  <path d="M40.8 22.8 L65.5 20 C64 30,60 36,52 38 L40 38.5 Z" fill="#1a1a1a"/>
  <circle cx="55.3" cy="29" r="3.6" fill="#9a9988"/>
  <path d="M69.8 21.4 L80.7 35.9" stroke="#111" stroke-width="3.2"/>
  <rect x="18" y="32.7" width="21" height="6.5" fill="#111"/>
  <circle cx="18.3" cy="35.9" r="11.6" fill="#e8e6dd" stroke="#1e1e1e" stroke-width="4.4"/>
  <circle cx="18.3" cy="35.9" r="6.8" fill="none" stroke="#8c8a74" stroke-width="2.4"/>
  <circle cx="80.7" cy="35.9" r="11.6" fill="#e8e6dd" stroke="#1e1e1e" stroke-width="4.4"/>
  <circle cx="80.7" cy="35.9" r="6.8" fill="none" stroke="#8c8a74" stroke-width="2.4"/>
  <circle cx="80.7" cy="35.9" r="3.6" fill="#111"/>
  <path d="M18.3 32.7 H39 V39.2 H18.3 Z" fill="#111"/>
</svg>
<!-- right scrollbar -->
<div style="position:absolute;left:2820px;top:343px;width:30px;height:1113px;background:rgba(0,0,0,0.02);border-left:1.5px solid #ebebeb;border-right:1.5px solid #ebebeb"></div>
<div style="position:absolute;left:2828px;top:349px;width:16px;height:687px;background:#c1c1c1;border-radius:8px"></div>


</body></html>
